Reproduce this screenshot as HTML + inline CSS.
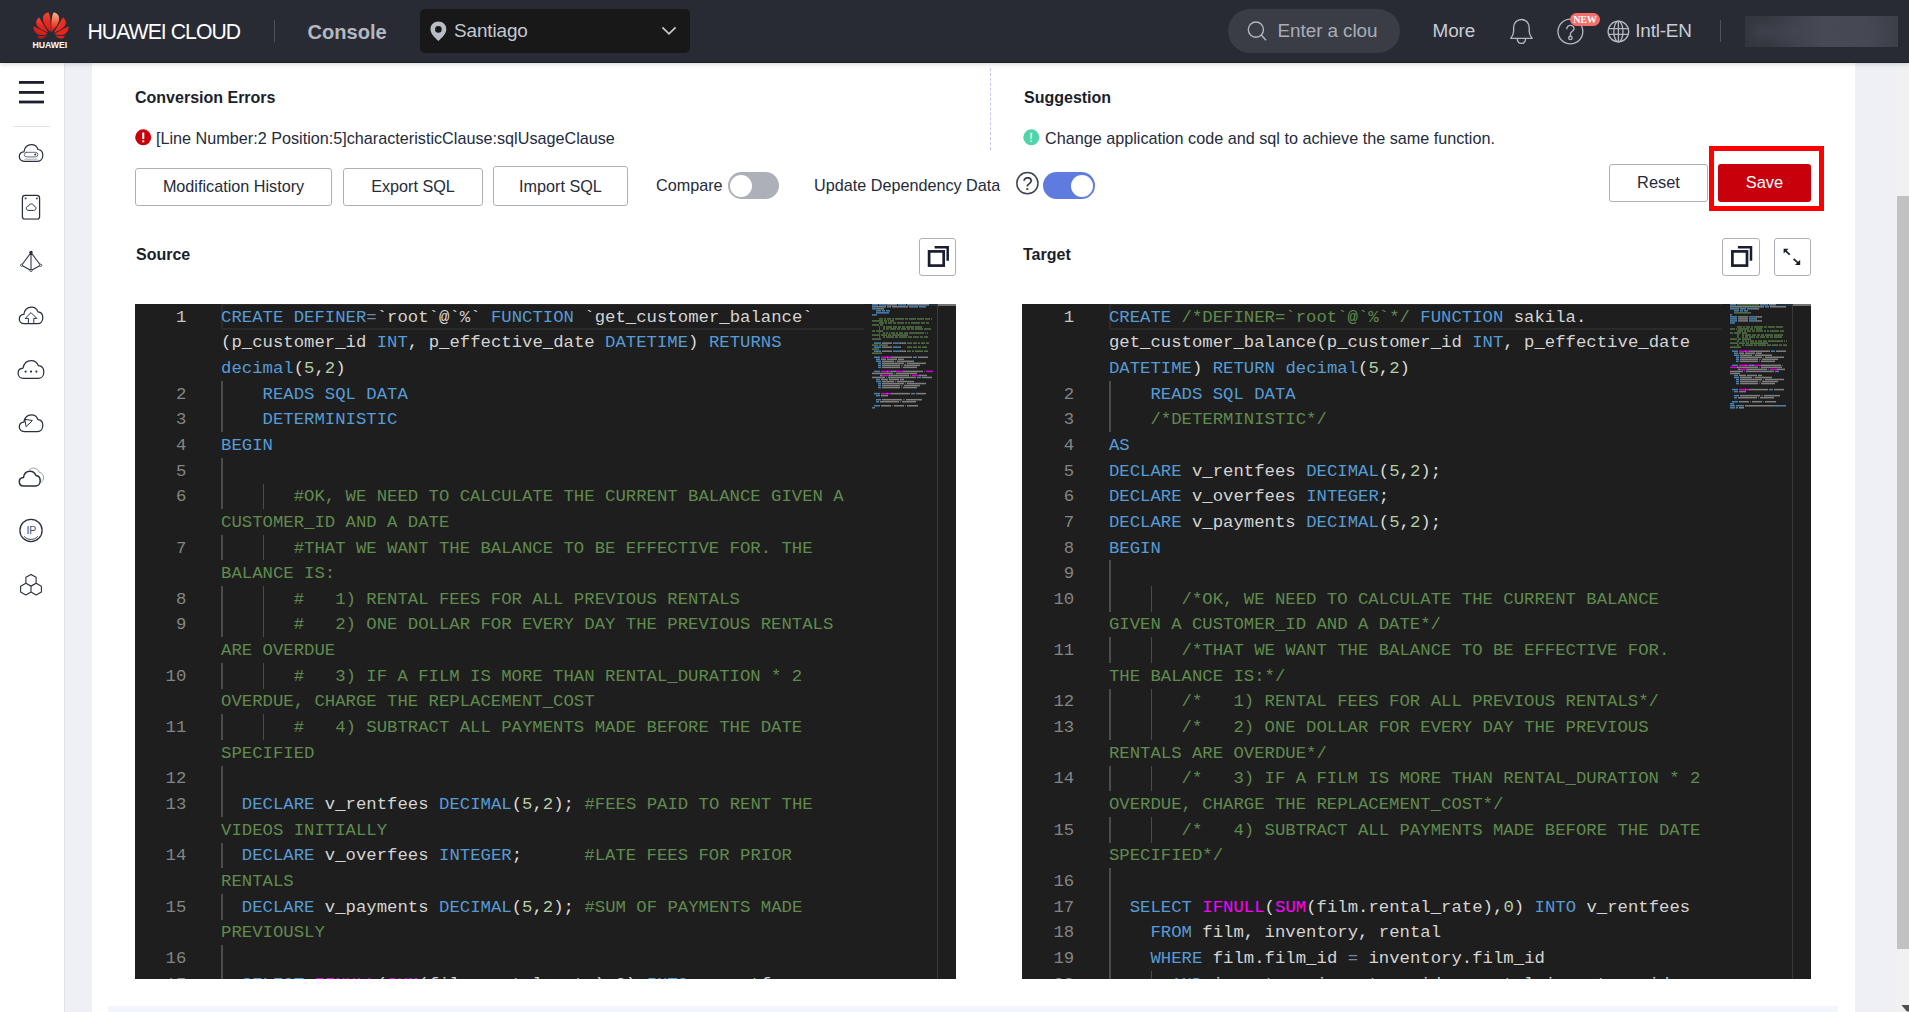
<!DOCTYPE html>
<html lang="en">
<head>
<meta charset="utf-8">
<title>Database and Application Migration UGO - HUAWEI CLOUD Console</title>
<style>
*{box-sizing:border-box}
html,body{margin:0;padding:0}
body{width:1909px;height:1012px;overflow:hidden;position:relative;background:#fff;font-family:"Liberation Sans",Arial,sans-serif;color:#252b3a;font-size:16.2px}
.abs,#hdr *,#side *,#main>*{position:absolute}
#hdr{position:absolute;left:0;top:0;width:1909px;height:63px;background:#282b33;border-bottom:1px solid #1e212a;box-shadow:0 1px 5px rgba(30,33,45,.2);z-index:5}
#hdr .t{white-space:nowrap;line-height:22px}
#side{position:absolute;left:0;top:63px;width:65px;height:949px;background:#fff;border-right:1px solid #dfe1e6}
#stripL{position:absolute;left:65px;top:63px;width:27px;height:949px;background:#eff0f6}
#stripR{position:absolute;left:1855px;top:63px;width:41px;height:949px;background:#eff0f6}
#sbar{position:absolute;left:1896px;top:63px;width:13px;height:949px;background:#f1f1f1}
#thumb{position:absolute;left:1897px;top:196px;width:12px;height:753px;background:#c1c1c1}
#main{position:absolute;left:0;top:0;width:1909px;height:1012px}
.b{font-weight:bold;white-space:nowrap;line-height:20px;color:#1a1e2b;font-size:16px;margin-top:1.2px}
.tx{white-space:nowrap;line-height:20px;color:#252b3a}
.btn{border:1px solid #adb0b8;border-radius:3px;background:#fff;text-align:center;white-space:nowrap;color:#252b3a}
.tg{border-radius:14px}
.tg i{position:absolute;top:2.5px;width:22px;height:22px;border-radius:50%;background:#fff}
/* editor */
.ed{position:absolute;background:#1e1e1e;overflow:hidden;font-family:"Liberation Mono","DejaVu Sans Mono",monospace;font-size:17.3px;color:#d4d4d4}
.ed>*{position:absolute}
.ed .r{left:86px;margin-top:.7px;height:25.65px;line-height:25.65px;white-space:pre;letter-spacing:0.008px}
.ed .ln{left:0;margin-top:.7px;width:50.5px;text-align:right;height:25.65px;line-height:25.65px;color:#858585;white-space:pre}
.ed .ln.a{color:#c6c6c6}
.ed .g{width:1.4px;background:#4b4b4b}
.ed .cl{height:26px;border:2px solid #2a2a2a;border-right:none;border-top-width:1.5px}
.ed .mm{top:0}
.ed .vr{top:0;width:1px;height:100%;background:#3a3a3a}
.ed .sl{top:0;height:2px;background:#727272}
.k{color:#569cd6}.i{color:#d4d4d4}.c{color:#608b4e}.n{color:#b5cea8}.o{color:#778899}.d{color:#dcdcdc}.f{color:#ff00ff}
</style>
</head>
<body>
<div id="main">
  <div id="side">
        <svg style="left:0;top:0" width="64" height="560" viewBox="0 63 64 560">
      <g fill="#1a1e2e"><rect x="19" y="81" width="25" height="2.8"/><rect x="19" y="91" width="25" height="2.8"/><rect x="19" y="100.6" width="25" height="2.8"/></g>
      <rect x="13" y="126" width="37" height="1" fill="#dfe1e6"/>
      <g fill="none" stroke="#2a2f3f" stroke-width="1.25" stroke-linejoin="round" stroke-linecap="round">
        <!-- 1 ecs cloud -->
        <path id="cl" d="M24.2 161.3C21.2 161.3 19.3 159.2 19.3 156.6C19.3 154 21.2 152.1 23.9 151.9C24.6 147.5 27.6 144.7 31.4 144.7C34.5 144.7 37 146.6 38 149.5C41.1 149.8 42.8 152.3 42.8 155.3C42.8 158.8 40.6 161.3 37.6 161.3z"/>
        <rect x="24.3" y="152.3" width="13.6" height="4.6" rx="2.3" stroke-width=".9" stroke="#555a69"/>
        <path d="M24.8 159.2H37.2" stroke="#a8abb5" stroke-width="1"/>
        <!-- 2 card -->
        <rect x="22.4" y="195.4" width="17.2" height="23.8" rx="2.8"/>
        <path d="M24.4 219H37.6" stroke="#8a8e99" stroke-width="1.6"/>
        <path d="M28.6 210.4C27.2 210.4 26.3 209.4 26.3 208.2C26.3 207 27.3 206.1 28.5 206.1C28.9 204.7 30 203.9 31.3 203.9C32.7 203.9 33.8 204.8 34.1 206.2C35.3 206.3 36 207.2 36 208.3C36 209.5 35.1 210.4 33.9 210.4z" stroke-width="1"/>
        <!-- 3 pyramid -->
        <path d="M31 252.5L21.6 265.3L31 270.5L40.6 265.3zM31 252.5V270.5" stroke-width="1.05"/>
        <!-- 4 cloud up -->
        <use href="#cl" y="162.4"/>
        <path d="M28.4 323.4V318.4H25.2L31 312.6L36.8 318.4H33.8V323.4" stroke-width="1"/>
        <!-- 5 cloud dots -->
        <path d="M23.4 378.4C20 378.4 18.1 376 18.1 373.2C18.1 370.4 20.1 368.4 23 368.2C23.8 363.5 27 360.5 31.2 360.5C34.6 360.5 37.3 362.6 38.4 365.7C41.8 366 43.8 368.7 43.8 371.9C43.8 375.7 41.4 378.4 38.1 378.4z"/>
        <!-- 6 cloud plane -->
        <use href="#cl" y="270.2"/>
        <path d="M25.2 419.4L32.4 420.5L26.4 426.4z" stroke-width="1"/>
        <!-- 7 double cloud -->
        <path d="M23.6 486C20.9 486 19.3 484.1 19.3 481.8C19.3 479.5 21 477.8 23.4 477.6C24 473.7 26.7 471.3 30 471.3C32.8 471.3 35 473 35.9 475.6C38.7 475.9 40.2 478.1 40.2 480.7C40.2 483.8 38.2 486 35.6 486z" stroke-width="1.5"/>
        <path d="M29.4 469.8C30.6 468.6 32 468.1 33.4 468.1C36.2 468.1 38.4 469.8 39.3 472.4C42.1 472.7 43.6 474.9 43.6 477.5C43.6 479.6 42.7 481.3 41.3 482.2" stroke="#8f939e" stroke-width=".9"/>
        <!-- 8 ip -->
        <circle cx="31" cy="530.4" r="11.1"/>
        <path d="M24.4 536.6C26 538.4 28.3 539.4 31 539.4C33.7 539.4 36 538.4 37.6 536.6" stroke-width=".9"/>
        <!-- 9 hexagons -->
        <path d="M31 574.4L36.1 577.3V583.2L31 586.1L25.9 583.2V577.3zM25.9 583.3L31 586.2V592.1L25.9 595L20.6 592.1V586.2zM36.2 583.3L41.4 586.2V592.1L36.2 595L31 592.1V586.2z" stroke-width="1.1"/>
      </g>
      <g fill="#2a2f3f">
        <circle cx="35.3" cy="154.6" r="1"/>
        <circle cx="25.6" cy="198.4" r=".9"/><circle cx="36.9" cy="198.4" r=".9"/>
        <circle cx="31" cy="252.3" r="1.6"/>
        <circle cx="25.6" cy="371.6" r="1.1"/><circle cx="31" cy="371.6" r="1.1"/><circle cx="36.4" cy="371.6" r="1.1"/>
      </g>
      <g fill="#fff" stroke="#2a2f3f" stroke-width=".8"><circle cx="21.6" cy="265.3" r="1.1"/><circle cx="40.6" cy="265.3" r="1.1"/><circle cx="31" cy="270.5" r="1.1"/></g>
      <text x="31.3" y="534.2" text-anchor="middle" font-family="Liberation Sans, Arial, sans-serif" font-size="10.6" fill="#4a4f5e" letter-spacing="-.2">IP</text>
    </svg>

  </div>
  <div id="stripL"></div>
  <div id="stripR"></div>
  <div id="sbar"></div>
  <div id="thumb"></div>
  <svg style="left:1901px;top:1005px" width="8" height="7" viewBox="0 0 8 7"><path d="M.4 0H8V6.4H5.9z" fill="#505050"/></svg>
  <div style="left:108px;top:1006px;width:1730px;height:6px;background:#f2f5fc"></div>

  <!-- top info -->
  <div class="b" style="left:135px;top:87px">Conversion Errors</div>
  <svg style="left:135px;top:129px" width="17" height="17" viewBox="0 0 17 17"><circle cx="8.2" cy="8.3" r="8" fill="#c7000b"/><rect x="7.2" y="3.6" width="2.1" height="6.4" rx=".6" fill="#fff"/><rect x="7.2" y="11.2" width="2.1" height="2.1" rx=".6" fill="#fff"/></svg>
  <div class="tx" style="left:156px;top:128px">[Line Number:2 Position:5]characteristicClause:sqlUsageClause</div>

  <div style="left:990px;top:68px;width:0;height:82px;border-left:1px dashed #c3c9f2"></div>

  <div class="b" style="left:1024px;top:87px">Suggestion</div>
  <svg style="left:1023px;top:129px" width="17" height="17" viewBox="0 0 17 17"><circle cx="8.3" cy="8.3" r="8" fill="#50d4ab"/><rect x="7.5" y="3.8" width="1.6" height="6.2" rx=".5" fill="#fff"/><rect x="7.5" y="11.3" width="1.6" height="1.8" rx=".5" fill="#fff"/></svg>
  <div class="tx" style="left:1045px;top:128px">Change application code and sql to achieve the same function.</div>

  <!-- toolbar -->
  <div class="btn" style="left:135px;top:168px;width:197px;height:38px;line-height:34px">Modification History</div>
  <div class="btn" style="left:343px;top:168px;width:140px;height:38px;line-height:34px">Export SQL</div>
  <div class="btn" style="left:493px;top:166px;width:135px;height:40px;line-height:38px">Import SQL</div>
  <div class="tx" style="left:656px;top:175px">Compare</div>
  <div class="tg" style="left:727.5px;top:172px;width:51.5px;height:27px;background:#adb0b8"><i style="left:2.5px"></i></div>
  <div class="tx" style="left:814px;top:175px">Update Dependency Data</div>
  <svg style="left:1015px;top:171px" width="25" height="25" viewBox="0 0 25 25"><circle cx="12.4" cy="12.2" r="10.6" fill="none" stroke="#3d4250" stroke-width="1.5"/><text x="12.4" y="18.6" text-anchor="middle" font-family="Liberation Sans, Arial, sans-serif" font-size="18" fill="#252b3a">?</text></svg>
  <div class="tg" style="left:1043px;top:172px;width:52px;height:27px;background:#5e7ce0"><i style="left:27.5px"></i></div>

  <div class="btn" style="left:1609px;top:164px;width:99px;height:38px;line-height:35px;font-size:16.4px">Reset</div>
  <div style="left:1709px;top:146px;width:115px;height:65px;border:5px solid #fe0000"></div>
  <div style="left:1718px;top:164px;width:93px;height:38px;line-height:36px;background:#c7000b;border-radius:3px;color:#fff;text-align:center;font-size:16.4px">Save</div>

  <!-- editor headers -->
  <div class="b" style="left:136px;top:244px">Source</div>
  <div class="btn" style="left:919px;top:238px;width:37px;height:38px"></div>
  <svg style="left:919px;top:238px" width="38" height="38" viewBox="0 0 38 38"><rect x="10.1" y="13.4" width="14.6" height="14.2" fill="none" stroke="#191e2e" stroke-width="2.7"/><path d="M15.6 9.3H28.7V22.8" fill="none" stroke="#191e2e" stroke-width="2.5"/></svg>

  <div class="b" style="left:1023px;top:244px">Target</div>
  <div class="btn" style="left:1722px;top:238px;width:38px;height:38px"></div>
  <svg style="left:1722px;top:238px" width="38" height="38" viewBox="0 0 38 38"><rect x="10.4" y="13.4" width="14.6" height="14.2" fill="none" stroke="#191e2e" stroke-width="2.7"/><path d="M15.9 9.3H29V22.8" fill="none" stroke="#191e2e" stroke-width="2.5"/></svg>
  <div class="btn" style="left:1774px;top:238px;width:37px;height:38px"></div>
  <svg style="left:1774px;top:238px" width="38" height="38" viewBox="0 0 38 38"><g fill="#191e2e" stroke="#191e2e"><path d="M11.6 12.8L15.7 16.6" stroke-width="1.7" fill="none"/><path d="M9.6 10.7H14.6L9.6 15.5z" stroke="none"/><path d="M19.6 20.8L24 24.8" stroke-width="1.7" fill="none"/><path d="M26.2 26.9H21L26.2 21.8z" stroke="none"/></g></svg>

<div class="ed" id="edL" style="left:135px;top:304px;width:821px;height:675px">
<div class="cl" style="left:86.0px;top:0;width:643.0px"></div>
<div class="ln a" style="top:0.00px;width:51.3px">1</div>
<div class="r" style="top:0.00px;left:86.0px"><span class="k">CREATE</span> <span class="k">DEFINER</span><span class="o">=</span><span class="i">`root`</span><span class="d">@</span><span class="i">`%`</span> <span class="k">FUNCTION</span> <span class="i">`get_customer_balance`</span></div>
<div class="r" style="top:25.65px;left:86.0px"><span class="d">(</span><span class="i">p_customer_id</span> <span class="k">INT</span><span class="d">,</span> <span class="i">p_effective_date</span> <span class="k">DATETIME</span><span class="d">)</span> <span class="k">RETURNS</span> </div>
<div class="r" style="top:51.30px;left:86.0px"><span class="k">decimal</span><span class="d">(</span><span class="n">5</span><span class="d">,</span><span class="n">2</span><span class="d">)</span></div>
<div class="ln" style="top:76.95px;width:51.3px">2</div>
<i class="g" style="left:86.3px;top:77px;height:26px"></i>
<div class="r" style="top:76.95px;left:86.0px">    <span class="k">READS</span> <span class="k">SQL</span> <span class="k">DATA</span></div>
<div class="ln" style="top:102.60px;width:51.3px">3</div>
<i class="g" style="left:86.3px;top:103px;height:25px"></i>
<div class="r" style="top:102.60px;left:86.0px">    <span class="k">DETERMINISTIC</span></div>
<div class="ln" style="top:128.25px;width:51.3px">4</div>
<div class="r" style="top:128.25px;left:86.0px"><span class="k">BEGIN</span></div>
<div class="ln" style="top:153.90px;width:51.3px">5</div>
<i class="g" style="left:86.3px;top:154px;height:26px"></i>
<div class="ln" style="top:179.55px;width:51.3px">6</div>
<i class="g" style="left:86.3px;top:180px;height:25px"></i>
<i class="g" style="left:127.9px;top:180px;height:25px"></i>
<div class="r" style="top:179.55px;left:86.0px">       <span class="c">#OK, WE NEED TO CALCULATE THE CURRENT BALANCE GIVEN A </span></div>
<div class="r" style="top:205.20px;left:86.0px"><span class="c">CUSTOMER_ID AND A DATE</span></div>
<div class="ln" style="top:230.85px;width:51.3px">7</div>
<i class="g" style="left:86.3px;top:231px;height:25px"></i>
<i class="g" style="left:127.9px;top:231px;height:25px"></i>
<div class="r" style="top:230.85px;left:86.0px">       <span class="c">#THAT WE WANT THE BALANCE TO BE EFFECTIVE FOR. THE </span></div>
<div class="r" style="top:256.50px;left:86.0px"><span class="c">BALANCE IS:</span></div>
<div class="ln" style="top:282.15px;width:51.3px">8</div>
<i class="g" style="left:86.3px;top:282px;height:26px"></i>
<i class="g" style="left:127.9px;top:282px;height:26px"></i>
<div class="r" style="top:282.15px;left:86.0px">       <span class="c">#   1) RENTAL FEES FOR ALL PREVIOUS RENTALS</span></div>
<div class="ln" style="top:307.80px;width:51.3px">9</div>
<i class="g" style="left:86.3px;top:308px;height:25px"></i>
<i class="g" style="left:127.9px;top:308px;height:25px"></i>
<div class="r" style="top:307.80px;left:86.0px">       <span class="c">#   2) ONE DOLLAR FOR EVERY DAY THE PREVIOUS RENTALS </span></div>
<div class="r" style="top:333.45px;left:86.0px"><span class="c">ARE OVERDUE</span></div>
<div class="ln" style="top:359.10px;width:51.3px">10</div>
<i class="g" style="left:86.3px;top:359px;height:26px"></i>
<i class="g" style="left:127.9px;top:359px;height:26px"></i>
<div class="r" style="top:359.10px;left:86.0px">       <span class="c">#   3) IF A FILM IS MORE THAN RENTAL_DURATION * 2 </span></div>
<div class="r" style="top:384.75px;left:86.0px"><span class="c">OVERDUE, CHARGE THE REPLACEMENT_COST</span></div>
<div class="ln" style="top:410.40px;width:51.3px">11</div>
<i class="g" style="left:86.3px;top:410px;height:26px"></i>
<i class="g" style="left:127.9px;top:410px;height:26px"></i>
<div class="r" style="top:410.40px;left:86.0px">       <span class="c">#   4) SUBTRACT ALL PAYMENTS MADE BEFORE THE DATE </span></div>
<div class="r" style="top:436.05px;left:86.0px"><span class="c">SPECIFIED</span></div>
<div class="ln" style="top:461.70px;width:51.3px">12</div>
<i class="g" style="left:86.3px;top:462px;height:25px"></i>
<div class="ln" style="top:487.35px;width:51.3px">13</div>
<i class="g" style="left:86.3px;top:487px;height:26px"></i>
<div class="r" style="top:487.35px;left:86.0px">  <span class="k">DECLARE</span> <span class="i">v_rentfees</span> <span class="k">DECIMAL</span><span class="d">(</span><span class="n">5</span><span class="d">,</span><span class="n">2</span><span class="d">);</span> <span class="c">#FEES PAID TO RENT THE </span></div>
<div class="r" style="top:513.00px;left:86.0px"><span class="c">VIDEOS INITIALLY</span></div>
<div class="ln" style="top:538.65px;width:51.3px">14</div>
<i class="g" style="left:86.3px;top:539px;height:25px"></i>
<div class="r" style="top:538.65px;left:86.0px">  <span class="k">DECLARE</span> <span class="i">v_overfees</span> <span class="k">INTEGER</span><span class="d">;</span>      <span class="c">#LATE FEES FOR PRIOR </span></div>
<div class="r" style="top:564.30px;left:86.0px"><span class="c">RENTALS</span></div>
<div class="ln" style="top:589.95px;width:51.3px">15</div>
<i class="g" style="left:86.3px;top:590px;height:26px"></i>
<div class="r" style="top:589.95px;left:86.0px">  <span class="k">DECLARE</span> <span class="i">v_payments</span> <span class="k">DECIMAL</span><span class="d">(</span><span class="n">5</span><span class="d">,</span><span class="n">2</span><span class="d">);</span> <span class="c">#SUM OF PAYMENTS MADE </span></div>
<div class="r" style="top:615.60px;left:86.0px"><span class="c">PREVIOUSLY</span></div>
<div class="ln" style="top:641.25px;width:51.3px">16</div>
<i class="g" style="left:86.3px;top:641px;height:26px"></i>
<div class="ln" style="top:666.90px;width:51.3px">17</div>
<i class="g" style="left:86.3px;top:667px;height:26px"></i>
<div class="r" style="top:666.90px;left:86.0px">  <span class="k">SELECT</span> <span class="f">IFNULL</span><span class="d">(</span><span class="f">SUM</span><span class="d">(</span><span class="i">film</span><span class="d">.</span><span class="i">rental_rate</span><span class="d">),</span><span class="n">0</span><span class="d">)</span> <span class="k">INTO</span> <span class="i">v_rentfees</span></div>
<div class="ln" style="top:692.55px;width:51.3px">18</div>
<i class="g" style="left:86.3px;top:693px;height:25px"></i>
<div class="r" style="top:692.55px;left:86.0px">    <span class="k">FROM</span> <span class="i">film</span><span class="d">,</span> <span class="i">inventory</span><span class="d">,</span> <span class="i">rental</span></div>
<svg class="mm" style="left:737px" width="70" height="107" viewBox="0 0 70 107"><rect x="0" y="0" width="66" height="2" fill="#264f78" opacity=".4"/><g opacity=".78"><rect x="0.0" y="0.00" width="6.0" height="1.5" fill="#569cd6"/><rect x="7.0" y="0.00" width="7.0" height="1.5" fill="#569cd6"/><rect x="14.0" y="0.00" width="1.0" height="1.5" fill="#778899" opacity=".68"/><rect x="15.0" y="0.00" width="6.0" height="1.5" fill="#d4d4d4" opacity=".68"/><rect x="21.0" y="0.00" width="1.0" height="1.5" fill="#dcdcdc" opacity=".68"/><rect x="22.0" y="0.00" width="3.0" height="1.5" fill="#d4d4d4" opacity=".68"/><rect x="26.0" y="0.00" width="8.0" height="1.5" fill="#569cd6"/><rect x="35.0" y="0.00" width="22.0" height="1.5" fill="#d4d4d4" opacity=".68"/><rect x="0.0" y="2.02" width="1.0" height="1.5" fill="#dcdcdc" opacity=".68"/><rect x="1.0" y="2.02" width="13.0" height="1.5" fill="#d4d4d4" opacity=".68"/><rect x="15.0" y="2.02" width="3.0" height="1.5" fill="#569cd6"/><rect x="18.0" y="2.02" width="1.0" height="1.5" fill="#dcdcdc" opacity=".68"/><rect x="20.0" y="2.02" width="16.0" height="1.5" fill="#d4d4d4" opacity=".68"/><rect x="37.0" y="2.02" width="8.0" height="1.5" fill="#569cd6"/><rect x="45.0" y="2.02" width="1.0" height="1.5" fill="#dcdcdc" opacity=".68"/><rect x="47.0" y="2.02" width="7.0" height="1.5" fill="#569cd6"/><rect x="0.0" y="4.04" width="7.0" height="1.5" fill="#569cd6"/><rect x="7.0" y="4.04" width="1.0" height="1.5" fill="#dcdcdc" opacity=".68"/><rect x="8.0" y="4.04" width="1.0" height="1.5" fill="#b5cea8" opacity=".68"/><rect x="9.0" y="4.04" width="1.0" height="1.5" fill="#dcdcdc" opacity=".68"/><rect x="10.0" y="4.04" width="1.0" height="1.5" fill="#b5cea8" opacity=".68"/><rect x="11.0" y="4.04" width="1.0" height="1.5" fill="#dcdcdc" opacity=".68"/><rect x="4.0" y="6.06" width="5.0" height="1.5" fill="#569cd6"/><rect x="10.0" y="6.06" width="3.0" height="1.5" fill="#569cd6"/><rect x="14.0" y="6.06" width="4.0" height="1.5" fill="#569cd6"/><rect x="4.0" y="8.08" width="13.0" height="1.5" fill="#569cd6"/><rect x="0.0" y="10.10" width="5.0" height="1.5" fill="#569cd6"/><rect x="7.0" y="14.14" width="4.0" height="1.5" fill="#608b4e"/><rect x="12.0" y="14.14" width="2.0" height="1.5" fill="#608b4e"/><rect x="15.0" y="14.14" width="4.0" height="1.5" fill="#608b4e"/><rect x="20.0" y="14.14" width="2.0" height="1.5" fill="#608b4e"/><rect x="23.0" y="14.14" width="9.0" height="1.5" fill="#608b4e"/><rect x="33.0" y="14.14" width="3.0" height="1.5" fill="#608b4e"/><rect x="37.0" y="14.14" width="7.0" height="1.5" fill="#608b4e"/><rect x="45.0" y="14.14" width="7.0" height="1.5" fill="#608b4e"/><rect x="53.0" y="14.14" width="5.0" height="1.5" fill="#608b4e"/><rect x="59.0" y="14.14" width="1.0" height="1.5" fill="#608b4e"/><rect x="0.0" y="16.16" width="11.0" height="1.5" fill="#608b4e"/><rect x="12.0" y="16.16" width="3.0" height="1.5" fill="#608b4e"/><rect x="16.0" y="16.16" width="1.0" height="1.5" fill="#608b4e"/><rect x="18.0" y="16.16" width="4.0" height="1.5" fill="#608b4e"/><rect x="7.0" y="18.18" width="5.0" height="1.5" fill="#608b4e"/><rect x="13.0" y="18.18" width="2.0" height="1.5" fill="#608b4e"/><rect x="16.0" y="18.18" width="4.0" height="1.5" fill="#608b4e"/><rect x="21.0" y="18.18" width="3.0" height="1.5" fill="#608b4e"/><rect x="25.0" y="18.18" width="7.0" height="1.5" fill="#608b4e"/><rect x="33.0" y="18.18" width="2.0" height="1.5" fill="#608b4e"/><rect x="36.0" y="18.18" width="2.0" height="1.5" fill="#608b4e"/><rect x="39.0" y="18.18" width="9.0" height="1.5" fill="#608b4e"/><rect x="49.0" y="18.18" width="4.0" height="1.5" fill="#608b4e"/><rect x="54.0" y="18.18" width="3.0" height="1.5" fill="#608b4e"/><rect x="0.0" y="20.20" width="7.0" height="1.5" fill="#608b4e"/><rect x="8.0" y="20.20" width="3.0" height="1.5" fill="#608b4e"/><rect x="7.0" y="22.22" width="1.0" height="1.5" fill="#608b4e"/><rect x="11.0" y="22.22" width="2.0" height="1.5" fill="#608b4e"/><rect x="14.0" y="22.22" width="6.0" height="1.5" fill="#608b4e"/><rect x="21.0" y="22.22" width="4.0" height="1.5" fill="#608b4e"/><rect x="26.0" y="22.22" width="3.0" height="1.5" fill="#608b4e"/><rect x="30.0" y="22.22" width="3.0" height="1.5" fill="#608b4e"/><rect x="34.0" y="22.22" width="8.0" height="1.5" fill="#608b4e"/><rect x="43.0" y="22.22" width="7.0" height="1.5" fill="#608b4e"/><rect x="7.0" y="24.24" width="1.0" height="1.5" fill="#608b4e"/><rect x="11.0" y="24.24" width="2.0" height="1.5" fill="#608b4e"/><rect x="14.0" y="24.24" width="3.0" height="1.5" fill="#608b4e"/><rect x="18.0" y="24.24" width="6.0" height="1.5" fill="#608b4e"/><rect x="25.0" y="24.24" width="3.0" height="1.5" fill="#608b4e"/><rect x="29.0" y="24.24" width="5.0" height="1.5" fill="#608b4e"/><rect x="35.0" y="24.24" width="3.0" height="1.5" fill="#608b4e"/><rect x="39.0" y="24.24" width="3.0" height="1.5" fill="#608b4e"/><rect x="43.0" y="24.24" width="8.0" height="1.5" fill="#608b4e"/><rect x="52.0" y="24.24" width="7.0" height="1.5" fill="#608b4e"/><rect x="0.0" y="26.26" width="3.0" height="1.5" fill="#608b4e"/><rect x="4.0" y="26.26" width="7.0" height="1.5" fill="#608b4e"/><rect x="7.0" y="28.28" width="1.0" height="1.5" fill="#608b4e"/><rect x="11.0" y="28.28" width="2.0" height="1.5" fill="#608b4e"/><rect x="14.0" y="28.28" width="2.0" height="1.5" fill="#608b4e"/><rect x="17.0" y="28.28" width="1.0" height="1.5" fill="#608b4e"/><rect x="19.0" y="28.28" width="4.0" height="1.5" fill="#608b4e"/><rect x="24.0" y="28.28" width="2.0" height="1.5" fill="#608b4e"/><rect x="27.0" y="28.28" width="4.0" height="1.5" fill="#608b4e"/><rect x="32.0" y="28.28" width="4.0" height="1.5" fill="#608b4e"/><rect x="37.0" y="28.28" width="15.0" height="1.5" fill="#608b4e"/><rect x="53.0" y="28.28" width="1.0" height="1.5" fill="#608b4e"/><rect x="55.0" y="28.28" width="1.0" height="1.5" fill="#608b4e"/><rect x="0.0" y="30.30" width="8.0" height="1.5" fill="#608b4e"/><rect x="9.0" y="30.30" width="6.0" height="1.5" fill="#608b4e"/><rect x="16.0" y="30.30" width="3.0" height="1.5" fill="#608b4e"/><rect x="20.0" y="30.30" width="16.0" height="1.5" fill="#608b4e"/><rect x="7.0" y="32.32" width="1.0" height="1.5" fill="#608b4e"/><rect x="11.0" y="32.32" width="2.0" height="1.5" fill="#608b4e"/><rect x="14.0" y="32.32" width="8.0" height="1.5" fill="#608b4e"/><rect x="23.0" y="32.32" width="3.0" height="1.5" fill="#608b4e"/><rect x="27.0" y="32.32" width="8.0" height="1.5" fill="#608b4e"/><rect x="36.0" y="32.32" width="4.0" height="1.5" fill="#608b4e"/><rect x="41.0" y="32.32" width="6.0" height="1.5" fill="#608b4e"/><rect x="48.0" y="32.32" width="3.0" height="1.5" fill="#608b4e"/><rect x="52.0" y="32.32" width="4.0" height="1.5" fill="#608b4e"/><rect x="0.0" y="34.34" width="9.0" height="1.5" fill="#608b4e"/><rect x="2.0" y="38.38" width="7.0" height="1.5" fill="#569cd6"/><rect x="10.0" y="38.38" width="10.0" height="1.5" fill="#d4d4d4" opacity=".68"/><rect x="21.0" y="38.38" width="7.0" height="1.5" fill="#569cd6"/><rect x="28.0" y="38.38" width="1.0" height="1.5" fill="#dcdcdc" opacity=".68"/><rect x="29.0" y="38.38" width="1.0" height="1.5" fill="#b5cea8" opacity=".68"/><rect x="30.0" y="38.38" width="1.0" height="1.5" fill="#dcdcdc" opacity=".68"/><rect x="31.0" y="38.38" width="1.0" height="1.5" fill="#b5cea8" opacity=".68"/><rect x="32.0" y="38.38" width="2.0" height="1.5" fill="#dcdcdc" opacity=".68"/><rect x="35.0" y="38.38" width="5.0" height="1.5" fill="#608b4e"/><rect x="41.0" y="38.38" width="4.0" height="1.5" fill="#608b4e"/><rect x="46.0" y="38.38" width="2.0" height="1.5" fill="#608b4e"/><rect x="49.0" y="38.38" width="4.0" height="1.5" fill="#608b4e"/><rect x="54.0" y="38.38" width="3.0" height="1.5" fill="#608b4e"/><rect x="0.0" y="40.40" width="6.0" height="1.5" fill="#608b4e"/><rect x="7.0" y="40.40" width="9.0" height="1.5" fill="#608b4e"/><rect x="2.0" y="42.42" width="7.0" height="1.5" fill="#569cd6"/><rect x="10.0" y="42.42" width="10.0" height="1.5" fill="#d4d4d4" opacity=".68"/><rect x="21.0" y="42.42" width="7.0" height="1.5" fill="#569cd6"/><rect x="28.0" y="42.42" width="1.0" height="1.5" fill="#dcdcdc" opacity=".68"/><rect x="35.0" y="42.42" width="5.0" height="1.5" fill="#608b4e"/><rect x="41.0" y="42.42" width="4.0" height="1.5" fill="#608b4e"/><rect x="46.0" y="42.42" width="3.0" height="1.5" fill="#608b4e"/><rect x="50.0" y="42.42" width="5.0" height="1.5" fill="#608b4e"/><rect x="0.0" y="44.44" width="7.0" height="1.5" fill="#608b4e"/><rect x="2.0" y="46.46" width="7.0" height="1.5" fill="#569cd6"/><rect x="10.0" y="46.46" width="10.0" height="1.5" fill="#d4d4d4" opacity=".68"/><rect x="21.0" y="46.46" width="7.0" height="1.5" fill="#569cd6"/><rect x="28.0" y="46.46" width="1.0" height="1.5" fill="#dcdcdc" opacity=".68"/><rect x="29.0" y="46.46" width="1.0" height="1.5" fill="#b5cea8" opacity=".68"/><rect x="30.0" y="46.46" width="1.0" height="1.5" fill="#dcdcdc" opacity=".68"/><rect x="31.0" y="46.46" width="1.0" height="1.5" fill="#b5cea8" opacity=".68"/><rect x="32.0" y="46.46" width="2.0" height="1.5" fill="#dcdcdc" opacity=".68"/><rect x="35.0" y="46.46" width="4.0" height="1.5" fill="#608b4e"/><rect x="40.0" y="46.46" width="2.0" height="1.5" fill="#608b4e"/><rect x="43.0" y="46.46" width="8.0" height="1.5" fill="#608b4e"/><rect x="52.0" y="46.46" width="4.0" height="1.5" fill="#608b4e"/><rect x="0.0" y="48.48" width="10.0" height="1.5" fill="#608b4e"/><rect x="2.0" y="52.52" width="6.0" height="1.5" fill="#569cd6"/><rect x="9.0" y="52.52" width="6.0" height="1.5" fill="#ff00ff"/><rect x="15.0" y="52.52" width="1.0" height="1.5" fill="#dcdcdc" opacity=".68"/><rect x="16.0" y="52.52" width="3.0" height="1.5" fill="#ff00ff"/><rect x="19.0" y="52.52" width="1.0" height="1.5" fill="#dcdcdc" opacity=".68"/><rect x="20.0" y="52.52" width="4.0" height="1.5" fill="#d4d4d4" opacity=".68"/><rect x="24.0" y="52.52" width="1.0" height="1.5" fill="#dcdcdc" opacity=".68"/><rect x="25.0" y="52.52" width="11.0" height="1.5" fill="#d4d4d4" opacity=".68"/><rect x="36.0" y="52.52" width="2.0" height="1.5" fill="#dcdcdc" opacity=".68"/><rect x="38.0" y="52.52" width="1.0" height="1.5" fill="#b5cea8" opacity=".68"/><rect x="39.0" y="52.52" width="1.0" height="1.5" fill="#dcdcdc" opacity=".68"/><rect x="41.0" y="52.52" width="4.0" height="1.5" fill="#569cd6"/><rect x="46.0" y="52.52" width="10.0" height="1.5" fill="#d4d4d4" opacity=".68"/><rect x="4.0" y="54.54" width="4.0" height="1.5" fill="#569cd6"/><rect x="9.0" y="54.54" width="4.0" height="1.5" fill="#d4d4d4" opacity=".68"/><rect x="13.0" y="54.54" width="1.0" height="1.5" fill="#dcdcdc" opacity=".68"/><rect x="15.0" y="54.54" width="9.0" height="1.5" fill="#d4d4d4" opacity=".68"/><rect x="24.0" y="54.54" width="1.0" height="1.5" fill="#dcdcdc" opacity=".68"/><rect x="26.0" y="54.54" width="6.0" height="1.5" fill="#d4d4d4" opacity=".68"/><rect x="4.0" y="56.56" width="5.0" height="1.5" fill="#569cd6"/><rect x="10.0" y="56.56" width="4.0" height="1.5" fill="#d4d4d4" opacity=".68"/><rect x="14.0" y="56.56" width="1.0" height="1.5" fill="#dcdcdc" opacity=".68"/><rect x="15.0" y="56.56" width="7.0" height="1.5" fill="#d4d4d4" opacity=".68"/><rect x="23.0" y="56.56" width="1.0" height="1.5" fill="#778899" opacity=".68"/><rect x="25.0" y="56.56" width="9.0" height="1.5" fill="#d4d4d4" opacity=".68"/><rect x="34.0" y="56.56" width="1.0" height="1.5" fill="#dcdcdc" opacity=".68"/><rect x="35.0" y="56.56" width="7.0" height="1.5" fill="#d4d4d4" opacity=".68"/><rect x="6.0" y="58.58" width="3.0" height="1.5" fill="#569cd6"/><rect x="10.0" y="58.58" width="9.0" height="1.5" fill="#d4d4d4" opacity=".68"/><rect x="19.0" y="58.58" width="1.0" height="1.5" fill="#dcdcdc" opacity=".68"/><rect x="20.0" y="58.58" width="12.0" height="1.5" fill="#d4d4d4" opacity=".68"/><rect x="33.0" y="58.58" width="1.0" height="1.5" fill="#778899" opacity=".68"/><rect x="35.0" y="58.58" width="6.0" height="1.5" fill="#d4d4d4" opacity=".68"/><rect x="41.0" y="58.58" width="1.0" height="1.5" fill="#dcdcdc" opacity=".68"/><rect x="42.0" y="58.58" width="12.0" height="1.5" fill="#d4d4d4" opacity=".68"/><rect x="6.0" y="60.60" width="3.0" height="1.5" fill="#569cd6"/><rect x="10.0" y="60.60" width="6.0" height="1.5" fill="#d4d4d4" opacity=".68"/><rect x="16.0" y="60.60" width="1.0" height="1.5" fill="#dcdcdc" opacity=".68"/><rect x="17.0" y="60.60" width="11.0" height="1.5" fill="#d4d4d4" opacity=".68"/><rect x="29.0" y="60.60" width="2.0" height="1.5" fill="#778899" opacity=".68"/><rect x="32.0" y="60.60" width="16.0" height="1.5" fill="#d4d4d4" opacity=".68"/><rect x="6.0" y="62.62" width="3.0" height="1.5" fill="#569cd6"/><rect x="10.0" y="62.62" width="6.0" height="1.5" fill="#d4d4d4" opacity=".68"/><rect x="16.0" y="62.62" width="1.0" height="1.5" fill="#dcdcdc" opacity=".68"/><rect x="17.0" y="62.62" width="11.0" height="1.5" fill="#d4d4d4" opacity=".68"/><rect x="29.0" y="62.62" width="1.0" height="1.5" fill="#778899" opacity=".68"/><rect x="31.0" y="62.62" width="13.0" height="1.5" fill="#d4d4d4" opacity=".68"/><rect x="44.0" y="62.62" width="1.0" height="1.5" fill="#dcdcdc" opacity=".68"/><rect x="2.0" y="66.66" width="6.0" height="1.5" fill="#569cd6"/><rect x="9.0" y="66.66" width="6.0" height="1.5" fill="#ff00ff"/><rect x="15.0" y="66.66" width="1.0" height="1.5" fill="#dcdcdc" opacity=".68"/><rect x="16.0" y="66.66" width="3.0" height="1.5" fill="#ff00ff"/><rect x="19.0" y="66.66" width="1.0" height="1.5" fill="#dcdcdc" opacity=".68"/><rect x="20.0" y="66.66" width="2.0" height="1.5" fill="#569cd6"/><rect x="22.0" y="66.66" width="2.0" height="1.5" fill="#dcdcdc" opacity=".68"/><rect x="24.0" y="66.66" width="7.0" height="1.5" fill="#ff00ff"/><rect x="31.0" y="66.66" width="1.0" height="1.5" fill="#dcdcdc" opacity=".68"/><rect x="32.0" y="66.66" width="6.0" height="1.5" fill="#d4d4d4" opacity=".68"/><rect x="38.0" y="66.66" width="1.0" height="1.5" fill="#dcdcdc" opacity=".68"/><rect x="39.0" y="66.66" width="11.0" height="1.5" fill="#d4d4d4" opacity=".68"/><rect x="50.0" y="66.66" width="1.0" height="1.5" fill="#dcdcdc" opacity=".68"/><rect x="52.0" y="66.66" width="1.0" height="1.5" fill="#778899" opacity=".68"/><rect x="54.0" y="66.66" width="7.0" height="1.5" fill="#ff00ff"/><rect x="0.0" y="68.68" width="1.0" height="1.5" fill="#dcdcdc" opacity=".68"/><rect x="1.0" y="68.68" width="6.0" height="1.5" fill="#d4d4d4" opacity=".68"/><rect x="7.0" y="68.68" width="1.0" height="1.5" fill="#dcdcdc" opacity=".68"/><rect x="8.0" y="68.68" width="11.0" height="1.5" fill="#d4d4d4" opacity=".68"/><rect x="19.0" y="68.68" width="2.0" height="1.5" fill="#dcdcdc" opacity=".68"/><rect x="22.0" y="68.68" width="1.0" height="1.5" fill="#778899" opacity=".68"/><rect x="24.0" y="68.68" width="4.0" height="1.5" fill="#d4d4d4" opacity=".68"/><rect x="28.0" y="68.68" width="1.0" height="1.5" fill="#dcdcdc" opacity=".68"/><rect x="29.0" y="68.68" width="15.0" height="1.5" fill="#d4d4d4" opacity=".68"/><rect x="44.0" y="68.68" width="1.0" height="1.5" fill="#dcdcdc" opacity=".68"/><rect x="8.0" y="70.70" width="2.0" height="1.5" fill="#dcdcdc" opacity=".68"/><rect x="10.0" y="70.70" width="7.0" height="1.5" fill="#ff00ff"/><rect x="17.0" y="70.70" width="1.0" height="1.5" fill="#dcdcdc" opacity=".68"/><rect x="18.0" y="70.70" width="6.0" height="1.5" fill="#d4d4d4" opacity=".68"/><rect x="24.0" y="70.70" width="1.0" height="1.5" fill="#dcdcdc" opacity=".68"/><rect x="25.0" y="70.70" width="11.0" height="1.5" fill="#d4d4d4" opacity=".68"/><rect x="36.0" y="70.70" width="1.0" height="1.5" fill="#dcdcdc" opacity=".68"/><rect x="38.0" y="70.70" width="1.0" height="1.5" fill="#778899" opacity=".68"/><rect x="40.0" y="70.70" width="7.0" height="1.5" fill="#ff00ff"/><rect x="47.0" y="70.70" width="1.0" height="1.5" fill="#dcdcdc" opacity=".68"/><rect x="48.0" y="70.70" width="6.0" height="1.5" fill="#d4d4d4" opacity=".68"/><rect x="54.0" y="70.70" width="1.0" height="1.5" fill="#dcdcdc" opacity=".68"/><rect x="0.0" y="72.72" width="11.0" height="1.5" fill="#d4d4d4" opacity=".68"/><rect x="11.0" y="72.72" width="2.0" height="1.5" fill="#dcdcdc" opacity=".68"/><rect x="14.0" y="72.72" width="1.0" height="1.5" fill="#778899" opacity=".68"/><rect x="16.0" y="72.72" width="4.0" height="1.5" fill="#d4d4d4" opacity=".68"/><rect x="20.0" y="72.72" width="1.0" height="1.5" fill="#dcdcdc" opacity=".68"/><rect x="21.0" y="72.72" width="15.0" height="1.5" fill="#d4d4d4" opacity=".68"/><rect x="36.0" y="72.72" width="2.0" height="1.5" fill="#dcdcdc" opacity=".68"/><rect x="38.0" y="72.72" width="1.0" height="1.5" fill="#b5cea8" opacity=".68"/><rect x="39.0" y="72.72" width="3.0" height="1.5" fill="#dcdcdc" opacity=".68"/><rect x="42.0" y="72.72" width="1.0" height="1.5" fill="#b5cea8" opacity=".68"/><rect x="43.0" y="72.72" width="1.0" height="1.5" fill="#dcdcdc" opacity=".68"/><rect x="45.0" y="72.72" width="4.0" height="1.5" fill="#569cd6"/><rect x="50.0" y="72.72" width="10.0" height="1.5" fill="#d4d4d4" opacity=".68"/><rect x="4.0" y="74.74" width="4.0" height="1.5" fill="#569cd6"/><rect x="9.0" y="74.74" width="6.0" height="1.5" fill="#d4d4d4" opacity=".68"/><rect x="15.0" y="74.74" width="1.0" height="1.5" fill="#dcdcdc" opacity=".68"/><rect x="17.0" y="74.74" width="9.0" height="1.5" fill="#d4d4d4" opacity=".68"/><rect x="26.0" y="74.74" width="1.0" height="1.5" fill="#dcdcdc" opacity=".68"/><rect x="28.0" y="74.74" width="4.0" height="1.5" fill="#d4d4d4" opacity=".68"/><rect x="4.0" y="76.76" width="5.0" height="1.5" fill="#569cd6"/><rect x="10.0" y="76.76" width="4.0" height="1.5" fill="#d4d4d4" opacity=".68"/><rect x="14.0" y="76.76" width="1.0" height="1.5" fill="#dcdcdc" opacity=".68"/><rect x="15.0" y="76.76" width="7.0" height="1.5" fill="#d4d4d4" opacity=".68"/><rect x="23.0" y="76.76" width="1.0" height="1.5" fill="#778899" opacity=".68"/><rect x="25.0" y="76.76" width="9.0" height="1.5" fill="#d4d4d4" opacity=".68"/><rect x="34.0" y="76.76" width="1.0" height="1.5" fill="#dcdcdc" opacity=".68"/><rect x="35.0" y="76.76" width="7.0" height="1.5" fill="#d4d4d4" opacity=".68"/><rect x="6.0" y="78.78" width="3.0" height="1.5" fill="#569cd6"/><rect x="10.0" y="78.78" width="9.0" height="1.5" fill="#d4d4d4" opacity=".68"/><rect x="19.0" y="78.78" width="1.0" height="1.5" fill="#dcdcdc" opacity=".68"/><rect x="20.0" y="78.78" width="12.0" height="1.5" fill="#d4d4d4" opacity=".68"/><rect x="33.0" y="78.78" width="1.0" height="1.5" fill="#778899" opacity=".68"/><rect x="35.0" y="78.78" width="6.0" height="1.5" fill="#d4d4d4" opacity=".68"/><rect x="41.0" y="78.78" width="1.0" height="1.5" fill="#dcdcdc" opacity=".68"/><rect x="42.0" y="78.78" width="12.0" height="1.5" fill="#d4d4d4" opacity=".68"/><rect x="6.0" y="80.80" width="3.0" height="1.5" fill="#569cd6"/><rect x="10.0" y="80.80" width="6.0" height="1.5" fill="#d4d4d4" opacity=".68"/><rect x="16.0" y="80.80" width="1.0" height="1.5" fill="#dcdcdc" opacity=".68"/><rect x="17.0" y="80.80" width="11.0" height="1.5" fill="#d4d4d4" opacity=".68"/><rect x="29.0" y="80.80" width="2.0" height="1.5" fill="#778899" opacity=".68"/><rect x="32.0" y="80.80" width="16.0" height="1.5" fill="#d4d4d4" opacity=".68"/><rect x="6.0" y="82.82" width="3.0" height="1.5" fill="#569cd6"/><rect x="10.0" y="82.82" width="6.0" height="1.5" fill="#d4d4d4" opacity=".68"/><rect x="16.0" y="82.82" width="1.0" height="1.5" fill="#dcdcdc" opacity=".68"/><rect x="17.0" y="82.82" width="11.0" height="1.5" fill="#d4d4d4" opacity=".68"/><rect x="29.0" y="82.82" width="1.0" height="1.5" fill="#778899" opacity=".68"/><rect x="31.0" y="82.82" width="13.0" height="1.5" fill="#d4d4d4" opacity=".68"/><rect x="44.0" y="82.82" width="1.0" height="1.5" fill="#dcdcdc" opacity=".68"/><rect x="2.0" y="88.88" width="6.0" height="1.5" fill="#569cd6"/><rect x="9.0" y="88.88" width="6.0" height="1.5" fill="#ff00ff"/><rect x="15.0" y="88.88" width="1.0" height="1.5" fill="#dcdcdc" opacity=".68"/><rect x="16.0" y="88.88" width="3.0" height="1.5" fill="#ff00ff"/><rect x="19.0" y="88.88" width="1.0" height="1.5" fill="#dcdcdc" opacity=".68"/><rect x="20.0" y="88.88" width="7.0" height="1.5" fill="#d4d4d4" opacity=".68"/><rect x="27.0" y="88.88" width="1.0" height="1.5" fill="#dcdcdc" opacity=".68"/><rect x="28.0" y="88.88" width="6.0" height="1.5" fill="#d4d4d4" opacity=".68"/><rect x="34.0" y="88.88" width="2.0" height="1.5" fill="#dcdcdc" opacity=".68"/><rect x="36.0" y="88.88" width="1.0" height="1.5" fill="#b5cea8" opacity=".68"/><rect x="37.0" y="88.88" width="1.0" height="1.5" fill="#dcdcdc" opacity=".68"/><rect x="39.0" y="88.88" width="4.0" height="1.5" fill="#569cd6"/><rect x="44.0" y="88.88" width="10.0" height="1.5" fill="#d4d4d4" opacity=".68"/><rect x="4.0" y="90.90" width="4.0" height="1.5" fill="#569cd6"/><rect x="9.0" y="90.90" width="7.0" height="1.5" fill="#d4d4d4" opacity=".68"/><rect x="4.0" y="94.94" width="5.0" height="1.5" fill="#569cd6"/><rect x="10.0" y="94.94" width="7.0" height="1.5" fill="#d4d4d4" opacity=".68"/><rect x="17.0" y="94.94" width="1.0" height="1.5" fill="#dcdcdc" opacity=".68"/><rect x="18.0" y="94.94" width="12.0" height="1.5" fill="#d4d4d4" opacity=".68"/><rect x="31.0" y="94.94" width="2.0" height="1.5" fill="#778899" opacity=".68"/><rect x="34.0" y="94.94" width="16.0" height="1.5" fill="#d4d4d4" opacity=".68"/><rect x="4.0" y="96.96" width="3.0" height="1.5" fill="#569cd6"/><rect x="8.0" y="96.96" width="7.0" height="1.5" fill="#d4d4d4" opacity=".68"/><rect x="15.0" y="96.96" width="1.0" height="1.5" fill="#dcdcdc" opacity=".68"/><rect x="16.0" y="96.96" width="11.0" height="1.5" fill="#d4d4d4" opacity=".68"/><rect x="28.0" y="96.96" width="1.0" height="1.5" fill="#778899" opacity=".68"/><rect x="30.0" y="96.96" width="13.0" height="1.5" fill="#d4d4d4" opacity=".68"/><rect x="43.0" y="96.96" width="1.0" height="1.5" fill="#dcdcdc" opacity=".68"/><rect x="2.0" y="101.00" width="6.0" height="1.5" fill="#569cd6"/><rect x="9.0" y="101.00" width="10.0" height="1.5" fill="#d4d4d4" opacity=".68"/><rect x="20.0" y="101.00" width="1.0" height="1.5" fill="#778899" opacity=".68"/><rect x="22.0" y="101.00" width="10.0" height="1.5" fill="#d4d4d4" opacity=".68"/><rect x="33.0" y="101.00" width="1.0" height="1.5" fill="#778899" opacity=".68"/><rect x="35.0" y="101.00" width="10.0" height="1.5" fill="#d4d4d4" opacity=".68"/><rect x="45.0" y="101.00" width="1.0" height="1.5" fill="#dcdcdc" opacity=".68"/><rect x="0.0" y="103.02" width="3.0" height="1.5" fill="#569cd6"/></g></svg>
<i class="vr" style="left:802px"></i>
<i class="sl" style="left:803px;width:18px"></i>
</div>
<div class="ed" id="edR" style="left:1022px;top:304px;width:789px;height:675px">
<div class="cl" style="left:86.9px;top:0;width:613.1px"></div>
<div class="ln a" style="top:0.00px;width:52.199999999999996px">1</div>
<div class="r" style="top:0.00px;left:86.9px"><span class="k">CREATE</span> <span class="c">/*DEFINER=`root`@`%`*/</span> <span class="k">FUNCTION</span> <span class="i">sakila</span><span class="d">.</span></div>
<div class="r" style="top:25.65px;left:86.9px"><span class="i">get_customer_balance</span><span class="d">(</span><span class="i">p_customer_id</span> <span class="k">INT</span><span class="d">,</span> <span class="i">p_effective_date</span> </div>
<div class="r" style="top:51.30px;left:86.9px"><span class="k">DATETIME</span><span class="d">)</span> <span class="k">RETURN</span> <span class="k">decimal</span><span class="d">(</span><span class="n">5</span><span class="d">,</span><span class="n">2</span><span class="d">)</span></div>
<div class="ln" style="top:76.95px;width:52.199999999999996px">2</div>
<i class="g" style="left:87.2px;top:77px;height:26px"></i>
<div class="r" style="top:76.95px;left:86.9px">    <span class="k">READS</span> <span class="k">SQL</span> <span class="k">DATA</span></div>
<div class="ln" style="top:102.60px;width:52.199999999999996px">3</div>
<i class="g" style="left:87.2px;top:103px;height:25px"></i>
<div class="r" style="top:102.60px;left:86.9px">    <span class="c">/*DETERMINISTIC*/</span></div>
<div class="ln" style="top:128.25px;width:52.199999999999996px">4</div>
<div class="r" style="top:128.25px;left:86.9px"><span class="k">AS</span></div>
<div class="ln" style="top:153.90px;width:52.199999999999996px">5</div>
<div class="r" style="top:153.90px;left:86.9px"><span class="k">DECLARE</span> <span class="i">v_rentfees</span> <span class="k">DECIMAL</span><span class="d">(</span><span class="n">5</span><span class="d">,</span><span class="n">2</span><span class="d">);</span></div>
<div class="ln" style="top:179.55px;width:52.199999999999996px">6</div>
<div class="r" style="top:179.55px;left:86.9px"><span class="k">DECLARE</span> <span class="i">v_overfees</span> <span class="k">INTEGER</span><span class="d">;</span></div>
<div class="ln" style="top:205.20px;width:52.199999999999996px">7</div>
<div class="r" style="top:205.20px;left:86.9px"><span class="k">DECLARE</span> <span class="i">v_payments</span> <span class="k">DECIMAL</span><span class="d">(</span><span class="n">5</span><span class="d">,</span><span class="n">2</span><span class="d">);</span></div>
<div class="ln" style="top:230.85px;width:52.199999999999996px">8</div>
<div class="r" style="top:230.85px;left:86.9px"><span class="k">BEGIN</span></div>
<div class="ln" style="top:256.50px;width:52.199999999999996px">9</div>
<i class="g" style="left:87.2px;top:256px;height:26px"></i>
<div class="ln" style="top:282.15px;width:52.199999999999996px">10</div>
<i class="g" style="left:87.2px;top:282px;height:26px"></i>
<i class="g" style="left:128.8px;top:282px;height:26px"></i>
<div class="r" style="top:282.15px;left:86.9px">       <span class="c">/*OK, WE NEED TO CALCULATE THE CURRENT BALANCE </span></div>
<div class="r" style="top:307.80px;left:86.9px"><span class="c">GIVEN A CUSTOMER_ID AND A DATE*/</span></div>
<div class="ln" style="top:333.45px;width:52.199999999999996px">11</div>
<i class="g" style="left:87.2px;top:333px;height:26px"></i>
<i class="g" style="left:128.8px;top:333px;height:26px"></i>
<div class="r" style="top:333.45px;left:86.9px">       <span class="c">/*THAT WE WANT THE BALANCE TO BE EFFECTIVE FOR. </span></div>
<div class="r" style="top:359.10px;left:86.9px"><span class="c">THE BALANCE IS:*/</span></div>
<div class="ln" style="top:384.75px;width:52.199999999999996px">12</div>
<i class="g" style="left:87.2px;top:385px;height:25px"></i>
<i class="g" style="left:128.8px;top:385px;height:25px"></i>
<div class="r" style="top:384.75px;left:86.9px">       <span class="c">/*   1) RENTAL FEES FOR ALL PREVIOUS RENTALS*/</span></div>
<div class="ln" style="top:410.40px;width:52.199999999999996px">13</div>
<i class="g" style="left:87.2px;top:410px;height:26px"></i>
<i class="g" style="left:128.8px;top:410px;height:26px"></i>
<div class="r" style="top:410.40px;left:86.9px">       <span class="c">/*   2) ONE DOLLAR FOR EVERY DAY THE PREVIOUS </span></div>
<div class="r" style="top:436.05px;left:86.9px"><span class="c">RENTALS ARE OVERDUE*/</span></div>
<div class="ln" style="top:461.70px;width:52.199999999999996px">14</div>
<i class="g" style="left:87.2px;top:462px;height:25px"></i>
<i class="g" style="left:128.8px;top:462px;height:25px"></i>
<div class="r" style="top:461.70px;left:86.9px">       <span class="c">/*   3) IF A FILM IS MORE THAN RENTAL_DURATION * 2 </span></div>
<div class="r" style="top:487.35px;left:86.9px"><span class="c">OVERDUE, CHARGE THE REPLACEMENT_COST*/</span></div>
<div class="ln" style="top:513.00px;width:52.199999999999996px">15</div>
<i class="g" style="left:87.2px;top:513px;height:26px"></i>
<i class="g" style="left:128.8px;top:513px;height:26px"></i>
<div class="r" style="top:513.00px;left:86.9px">       <span class="c">/*   4) SUBTRACT ALL PAYMENTS MADE BEFORE THE DATE </span></div>
<div class="r" style="top:538.65px;left:86.9px"><span class="c">SPECIFIED*/</span></div>
<div class="ln" style="top:564.30px;width:52.199999999999996px">16</div>
<i class="g" style="left:87.2px;top:564px;height:26px"></i>
<div class="ln" style="top:589.95px;width:52.199999999999996px">17</div>
<i class="g" style="left:87.2px;top:590px;height:26px"></i>
<div class="r" style="top:589.95px;left:86.9px">  <span class="k">SELECT</span> <span class="f">IFNULL</span><span class="d">(</span><span class="f">SUM</span><span class="d">(</span><span class="i">film</span><span class="d">.</span><span class="i">rental_rate</span><span class="d">),</span><span class="n">0</span><span class="d">)</span> <span class="k">INTO</span> <span class="i">v_rentfees</span></div>
<div class="ln" style="top:615.60px;width:52.199999999999996px">18</div>
<i class="g" style="left:87.2px;top:616px;height:25px"></i>
<div class="r" style="top:615.60px;left:86.9px">    <span class="k">FROM</span> <span class="i">film</span><span class="d">,</span> <span class="i">inventory</span><span class="d">,</span> <span class="i">rental</span></div>
<div class="ln" style="top:641.25px;width:52.199999999999996px">19</div>
<i class="g" style="left:87.2px;top:641px;height:26px"></i>
<div class="r" style="top:641.25px;left:86.9px">    <span class="k">WHERE</span> <span class="i">film</span><span class="d">.</span><span class="i">film_id</span> <span class="o">=</span> <span class="i">inventory</span><span class="d">.</span><span class="i">film_id</span></div>
<div class="ln" style="top:666.90px;width:52.199999999999996px">20</div>
<i class="g" style="left:87.2px;top:667px;height:26px"></i>
<i class="g" style="left:128.8px;top:667px;height:26px"></i>
<div class="r" style="top:666.90px;left:86.9px">      <span class="k">AND</span> <span class="i">inventory</span><span class="d">.</span><span class="i">inventory_id</span> <span class="o">=</span> <span class="i">rental</span><span class="d">.</span><span class="i">inventory_id</span></div>
<div class="ln" style="top:692.55px;width:52.199999999999996px">21</div>
<i class="g" style="left:87.2px;top:693px;height:25px"></i>
<i class="g" style="left:128.8px;top:693px;height:25px"></i>
<div class="r" style="top:692.55px;left:86.9px">      <span class="k">AND</span> <span class="i">rental</span><span class="d">.</span><span class="i">rental_date</span> <span class="o">&lt;=</span> <span class="i">p_effective_date</span></div>
<svg class="mm" style="left:708px" width="70" height="107" viewBox="0 0 70 107"><rect x="0" y="0" width="66" height="2" fill="#264f78" opacity=".4"/><g opacity=".78"><rect x="0.0" y="0.00" width="6.0" height="1.5" fill="#569cd6"/><rect x="7.0" y="0.00" width="22.0" height="1.5" fill="#608b4e"/><rect x="30.0" y="0.00" width="8.0" height="1.5" fill="#569cd6"/><rect x="39.0" y="0.00" width="6.0" height="1.5" fill="#d4d4d4" opacity=".68"/><rect x="45.0" y="0.00" width="1.0" height="1.5" fill="#dcdcdc" opacity=".68"/><rect x="0.0" y="2.02" width="20.0" height="1.5" fill="#d4d4d4" opacity=".68"/><rect x="20.0" y="2.02" width="1.0" height="1.5" fill="#dcdcdc" opacity=".68"/><rect x="21.0" y="2.02" width="13.0" height="1.5" fill="#d4d4d4" opacity=".68"/><rect x="35.0" y="2.02" width="3.0" height="1.5" fill="#569cd6"/><rect x="38.0" y="2.02" width="1.0" height="1.5" fill="#dcdcdc" opacity=".68"/><rect x="40.0" y="2.02" width="16.0" height="1.5" fill="#d4d4d4" opacity=".68"/><rect x="0.0" y="4.04" width="8.0" height="1.5" fill="#569cd6"/><rect x="8.0" y="4.04" width="1.0" height="1.5" fill="#dcdcdc" opacity=".68"/><rect x="10.0" y="4.04" width="6.0" height="1.5" fill="#569cd6"/><rect x="17.0" y="4.04" width="7.0" height="1.5" fill="#569cd6"/><rect x="24.0" y="4.04" width="1.0" height="1.5" fill="#dcdcdc" opacity=".68"/><rect x="25.0" y="4.04" width="1.0" height="1.5" fill="#b5cea8" opacity=".68"/><rect x="26.0" y="4.04" width="1.0" height="1.5" fill="#dcdcdc" opacity=".68"/><rect x="27.0" y="4.04" width="1.0" height="1.5" fill="#b5cea8" opacity=".68"/><rect x="28.0" y="4.04" width="1.0" height="1.5" fill="#dcdcdc" opacity=".68"/><rect x="4.0" y="6.06" width="5.0" height="1.5" fill="#569cd6"/><rect x="10.0" y="6.06" width="3.0" height="1.5" fill="#569cd6"/><rect x="14.0" y="6.06" width="4.0" height="1.5" fill="#569cd6"/><rect x="4.0" y="8.08" width="17.0" height="1.5" fill="#608b4e"/><rect x="0.0" y="10.10" width="2.0" height="1.5" fill="#569cd6"/><rect x="0.0" y="12.12" width="7.0" height="1.5" fill="#569cd6"/><rect x="8.0" y="12.12" width="10.0" height="1.5" fill="#d4d4d4" opacity=".68"/><rect x="19.0" y="12.12" width="7.0" height="1.5" fill="#569cd6"/><rect x="26.0" y="12.12" width="1.0" height="1.5" fill="#dcdcdc" opacity=".68"/><rect x="27.0" y="12.12" width="1.0" height="1.5" fill="#b5cea8" opacity=".68"/><rect x="28.0" y="12.12" width="1.0" height="1.5" fill="#dcdcdc" opacity=".68"/><rect x="29.0" y="12.12" width="1.0" height="1.5" fill="#b5cea8" opacity=".68"/><rect x="30.0" y="12.12" width="2.0" height="1.5" fill="#dcdcdc" opacity=".68"/><rect x="0.0" y="14.14" width="7.0" height="1.5" fill="#569cd6"/><rect x="8.0" y="14.14" width="10.0" height="1.5" fill="#d4d4d4" opacity=".68"/><rect x="19.0" y="14.14" width="7.0" height="1.5" fill="#569cd6"/><rect x="26.0" y="14.14" width="1.0" height="1.5" fill="#dcdcdc" opacity=".68"/><rect x="0.0" y="16.16" width="7.0" height="1.5" fill="#569cd6"/><rect x="8.0" y="16.16" width="10.0" height="1.5" fill="#d4d4d4" opacity=".68"/><rect x="19.0" y="16.16" width="7.0" height="1.5" fill="#569cd6"/><rect x="26.0" y="16.16" width="1.0" height="1.5" fill="#dcdcdc" opacity=".68"/><rect x="27.0" y="16.16" width="1.0" height="1.5" fill="#b5cea8" opacity=".68"/><rect x="28.0" y="16.16" width="1.0" height="1.5" fill="#dcdcdc" opacity=".68"/><rect x="29.0" y="16.16" width="1.0" height="1.5" fill="#b5cea8" opacity=".68"/><rect x="30.0" y="16.16" width="2.0" height="1.5" fill="#dcdcdc" opacity=".68"/><rect x="0.0" y="18.18" width="5.0" height="1.5" fill="#569cd6"/><rect x="7.0" y="22.22" width="5.0" height="1.5" fill="#608b4e"/><rect x="13.0" y="22.22" width="2.0" height="1.5" fill="#608b4e"/><rect x="16.0" y="22.22" width="4.0" height="1.5" fill="#608b4e"/><rect x="21.0" y="22.22" width="2.0" height="1.5" fill="#608b4e"/><rect x="24.0" y="22.22" width="9.0" height="1.5" fill="#608b4e"/><rect x="34.0" y="22.22" width="3.0" height="1.5" fill="#608b4e"/><rect x="38.0" y="22.22" width="7.0" height="1.5" fill="#608b4e"/><rect x="46.0" y="22.22" width="7.0" height="1.5" fill="#608b4e"/><rect x="0.0" y="24.24" width="5.0" height="1.5" fill="#608b4e"/><rect x="6.0" y="24.24" width="1.0" height="1.5" fill="#608b4e"/><rect x="8.0" y="24.24" width="11.0" height="1.5" fill="#608b4e"/><rect x="20.0" y="24.24" width="3.0" height="1.5" fill="#608b4e"/><rect x="24.0" y="24.24" width="1.0" height="1.5" fill="#608b4e"/><rect x="26.0" y="24.24" width="6.0" height="1.5" fill="#608b4e"/><rect x="7.0" y="26.26" width="6.0" height="1.5" fill="#608b4e"/><rect x="14.0" y="26.26" width="2.0" height="1.5" fill="#608b4e"/><rect x="17.0" y="26.26" width="4.0" height="1.5" fill="#608b4e"/><rect x="22.0" y="26.26" width="3.0" height="1.5" fill="#608b4e"/><rect x="26.0" y="26.26" width="7.0" height="1.5" fill="#608b4e"/><rect x="34.0" y="26.26" width="2.0" height="1.5" fill="#608b4e"/><rect x="37.0" y="26.26" width="2.0" height="1.5" fill="#608b4e"/><rect x="40.0" y="26.26" width="9.0" height="1.5" fill="#608b4e"/><rect x="50.0" y="26.26" width="4.0" height="1.5" fill="#608b4e"/><rect x="0.0" y="28.28" width="3.0" height="1.5" fill="#608b4e"/><rect x="4.0" y="28.28" width="7.0" height="1.5" fill="#608b4e"/><rect x="12.0" y="28.28" width="5.0" height="1.5" fill="#608b4e"/><rect x="7.0" y="30.30" width="2.0" height="1.5" fill="#608b4e"/><rect x="12.0" y="30.30" width="2.0" height="1.5" fill="#608b4e"/><rect x="15.0" y="30.30" width="6.0" height="1.5" fill="#608b4e"/><rect x="22.0" y="30.30" width="4.0" height="1.5" fill="#608b4e"/><rect x="27.0" y="30.30" width="3.0" height="1.5" fill="#608b4e"/><rect x="31.0" y="30.30" width="3.0" height="1.5" fill="#608b4e"/><rect x="35.0" y="30.30" width="8.0" height="1.5" fill="#608b4e"/><rect x="44.0" y="30.30" width="9.0" height="1.5" fill="#608b4e"/><rect x="7.0" y="32.32" width="2.0" height="1.5" fill="#608b4e"/><rect x="12.0" y="32.32" width="2.0" height="1.5" fill="#608b4e"/><rect x="15.0" y="32.32" width="3.0" height="1.5" fill="#608b4e"/><rect x="19.0" y="32.32" width="6.0" height="1.5" fill="#608b4e"/><rect x="26.0" y="32.32" width="3.0" height="1.5" fill="#608b4e"/><rect x="30.0" y="32.32" width="5.0" height="1.5" fill="#608b4e"/><rect x="36.0" y="32.32" width="3.0" height="1.5" fill="#608b4e"/><rect x="40.0" y="32.32" width="3.0" height="1.5" fill="#608b4e"/><rect x="44.0" y="32.32" width="8.0" height="1.5" fill="#608b4e"/><rect x="0.0" y="34.34" width="7.0" height="1.5" fill="#608b4e"/><rect x="8.0" y="34.34" width="3.0" height="1.5" fill="#608b4e"/><rect x="12.0" y="34.34" width="9.0" height="1.5" fill="#608b4e"/><rect x="7.0" y="36.36" width="2.0" height="1.5" fill="#608b4e"/><rect x="12.0" y="36.36" width="2.0" height="1.5" fill="#608b4e"/><rect x="15.0" y="36.36" width="2.0" height="1.5" fill="#608b4e"/><rect x="18.0" y="36.36" width="1.0" height="1.5" fill="#608b4e"/><rect x="20.0" y="36.36" width="4.0" height="1.5" fill="#608b4e"/><rect x="25.0" y="36.36" width="2.0" height="1.5" fill="#608b4e"/><rect x="28.0" y="36.36" width="4.0" height="1.5" fill="#608b4e"/><rect x="33.0" y="36.36" width="4.0" height="1.5" fill="#608b4e"/><rect x="38.0" y="36.36" width="15.0" height="1.5" fill="#608b4e"/><rect x="54.0" y="36.36" width="1.0" height="1.5" fill="#608b4e"/><rect x="56.0" y="36.36" width="1.0" height="1.5" fill="#608b4e"/><rect x="0.0" y="38.38" width="8.0" height="1.5" fill="#608b4e"/><rect x="9.0" y="38.38" width="6.0" height="1.5" fill="#608b4e"/><rect x="16.0" y="38.38" width="3.0" height="1.5" fill="#608b4e"/><rect x="20.0" y="38.38" width="18.0" height="1.5" fill="#608b4e"/><rect x="7.0" y="40.40" width="2.0" height="1.5" fill="#608b4e"/><rect x="12.0" y="40.40" width="2.0" height="1.5" fill="#608b4e"/><rect x="15.0" y="40.40" width="8.0" height="1.5" fill="#608b4e"/><rect x="24.0" y="40.40" width="3.0" height="1.5" fill="#608b4e"/><rect x="28.0" y="40.40" width="8.0" height="1.5" fill="#608b4e"/><rect x="37.0" y="40.40" width="4.0" height="1.5" fill="#608b4e"/><rect x="42.0" y="40.40" width="6.0" height="1.5" fill="#608b4e"/><rect x="49.0" y="40.40" width="3.0" height="1.5" fill="#608b4e"/><rect x="53.0" y="40.40" width="4.0" height="1.5" fill="#608b4e"/><rect x="0.0" y="42.42" width="11.0" height="1.5" fill="#608b4e"/><rect x="2.0" y="46.46" width="6.0" height="1.5" fill="#569cd6"/><rect x="9.0" y="46.46" width="6.0" height="1.5" fill="#ff00ff"/><rect x="15.0" y="46.46" width="1.0" height="1.5" fill="#dcdcdc" opacity=".68"/><rect x="16.0" y="46.46" width="3.0" height="1.5" fill="#ff00ff"/><rect x="19.0" y="46.46" width="1.0" height="1.5" fill="#dcdcdc" opacity=".68"/><rect x="20.0" y="46.46" width="4.0" height="1.5" fill="#d4d4d4" opacity=".68"/><rect x="24.0" y="46.46" width="1.0" height="1.5" fill="#dcdcdc" opacity=".68"/><rect x="25.0" y="46.46" width="11.0" height="1.5" fill="#d4d4d4" opacity=".68"/><rect x="36.0" y="46.46" width="2.0" height="1.5" fill="#dcdcdc" opacity=".68"/><rect x="38.0" y="46.46" width="1.0" height="1.5" fill="#b5cea8" opacity=".68"/><rect x="39.0" y="46.46" width="1.0" height="1.5" fill="#dcdcdc" opacity=".68"/><rect x="41.0" y="46.46" width="4.0" height="1.5" fill="#569cd6"/><rect x="46.0" y="46.46" width="10.0" height="1.5" fill="#d4d4d4" opacity=".68"/><rect x="4.0" y="48.48" width="4.0" height="1.5" fill="#569cd6"/><rect x="9.0" y="48.48" width="4.0" height="1.5" fill="#d4d4d4" opacity=".68"/><rect x="13.0" y="48.48" width="1.0" height="1.5" fill="#dcdcdc" opacity=".68"/><rect x="15.0" y="48.48" width="9.0" height="1.5" fill="#d4d4d4" opacity=".68"/><rect x="24.0" y="48.48" width="1.0" height="1.5" fill="#dcdcdc" opacity=".68"/><rect x="26.0" y="48.48" width="6.0" height="1.5" fill="#d4d4d4" opacity=".68"/><rect x="4.0" y="50.50" width="5.0" height="1.5" fill="#569cd6"/><rect x="10.0" y="50.50" width="4.0" height="1.5" fill="#d4d4d4" opacity=".68"/><rect x="14.0" y="50.50" width="1.0" height="1.5" fill="#dcdcdc" opacity=".68"/><rect x="15.0" y="50.50" width="7.0" height="1.5" fill="#d4d4d4" opacity=".68"/><rect x="23.0" y="50.50" width="1.0" height="1.5" fill="#778899" opacity=".68"/><rect x="25.0" y="50.50" width="9.0" height="1.5" fill="#d4d4d4" opacity=".68"/><rect x="34.0" y="50.50" width="1.0" height="1.5" fill="#dcdcdc" opacity=".68"/><rect x="35.0" y="50.50" width="7.0" height="1.5" fill="#d4d4d4" opacity=".68"/><rect x="6.0" y="52.52" width="3.0" height="1.5" fill="#569cd6"/><rect x="10.0" y="52.52" width="9.0" height="1.5" fill="#d4d4d4" opacity=".68"/><rect x="19.0" y="52.52" width="1.0" height="1.5" fill="#dcdcdc" opacity=".68"/><rect x="20.0" y="52.52" width="12.0" height="1.5" fill="#d4d4d4" opacity=".68"/><rect x="33.0" y="52.52" width="1.0" height="1.5" fill="#778899" opacity=".68"/><rect x="35.0" y="52.52" width="6.0" height="1.5" fill="#d4d4d4" opacity=".68"/><rect x="41.0" y="52.52" width="1.0" height="1.5" fill="#dcdcdc" opacity=".68"/><rect x="42.0" y="52.52" width="12.0" height="1.5" fill="#d4d4d4" opacity=".68"/><rect x="6.0" y="54.54" width="3.0" height="1.5" fill="#569cd6"/><rect x="10.0" y="54.54" width="6.0" height="1.5" fill="#d4d4d4" opacity=".68"/><rect x="16.0" y="54.54" width="1.0" height="1.5" fill="#dcdcdc" opacity=".68"/><rect x="17.0" y="54.54" width="11.0" height="1.5" fill="#d4d4d4" opacity=".68"/><rect x="29.0" y="54.54" width="2.0" height="1.5" fill="#778899" opacity=".68"/><rect x="32.0" y="54.54" width="16.0" height="1.5" fill="#d4d4d4" opacity=".68"/><rect x="6.0" y="56.56" width="3.0" height="1.5" fill="#569cd6"/><rect x="10.0" y="56.56" width="6.0" height="1.5" fill="#d4d4d4" opacity=".68"/><rect x="16.0" y="56.56" width="1.0" height="1.5" fill="#dcdcdc" opacity=".68"/><rect x="17.0" y="56.56" width="11.0" height="1.5" fill="#d4d4d4" opacity=".68"/><rect x="29.0" y="56.56" width="1.0" height="1.5" fill="#778899" opacity=".68"/><rect x="31.0" y="56.56" width="13.0" height="1.5" fill="#d4d4d4" opacity=".68"/><rect x="44.0" y="56.56" width="1.0" height="1.5" fill="#dcdcdc" opacity=".68"/><rect x="2.0" y="60.60" width="6.0" height="1.5" fill="#569cd6"/><rect x="9.0" y="60.60" width="6.0" height="1.5" fill="#ff00ff"/><rect x="15.0" y="60.60" width="1.0" height="1.5" fill="#dcdcdc" opacity=".68"/><rect x="16.0" y="60.60" width="3.0" height="1.5" fill="#ff00ff"/><rect x="19.0" y="60.60" width="1.0" height="1.5" fill="#dcdcdc" opacity=".68"/><rect x="20.0" y="60.60" width="2.0" height="1.5" fill="#569cd6"/><rect x="22.0" y="60.60" width="2.0" height="1.5" fill="#dcdcdc" opacity=".68"/><rect x="24.0" y="60.60" width="7.0" height="1.5" fill="#ff00ff"/><rect x="31.0" y="60.60" width="1.0" height="1.5" fill="#dcdcdc" opacity=".68"/><rect x="32.0" y="60.60" width="6.0" height="1.5" fill="#d4d4d4" opacity=".68"/><rect x="38.0" y="60.60" width="1.0" height="1.5" fill="#dcdcdc" opacity=".68"/><rect x="39.0" y="60.60" width="11.0" height="1.5" fill="#d4d4d4" opacity=".68"/><rect x="50.0" y="60.60" width="1.0" height="1.5" fill="#dcdcdc" opacity=".68"/><rect x="52.0" y="60.60" width="1.0" height="1.5" fill="#778899" opacity=".68"/><rect x="0.0" y="62.62" width="7.0" height="1.5" fill="#ff00ff"/><rect x="7.0" y="62.62" width="1.0" height="1.5" fill="#dcdcdc" opacity=".68"/><rect x="8.0" y="62.62" width="6.0" height="1.5" fill="#d4d4d4" opacity=".68"/><rect x="14.0" y="62.62" width="1.0" height="1.5" fill="#dcdcdc" opacity=".68"/><rect x="15.0" y="62.62" width="11.0" height="1.5" fill="#d4d4d4" opacity=".68"/><rect x="26.0" y="62.62" width="2.0" height="1.5" fill="#dcdcdc" opacity=".68"/><rect x="29.0" y="62.62" width="1.0" height="1.5" fill="#778899" opacity=".68"/><rect x="31.0" y="62.62" width="4.0" height="1.5" fill="#d4d4d4" opacity=".68"/><rect x="35.0" y="62.62" width="1.0" height="1.5" fill="#dcdcdc" opacity=".68"/><rect x="36.0" y="62.62" width="15.0" height="1.5" fill="#d4d4d4" opacity=".68"/><rect x="51.0" y="62.62" width="1.0" height="1.5" fill="#dcdcdc" opacity=".68"/><rect x="8.0" y="64.64" width="2.0" height="1.5" fill="#dcdcdc" opacity=".68"/><rect x="10.0" y="64.64" width="7.0" height="1.5" fill="#ff00ff"/><rect x="17.0" y="64.64" width="1.0" height="1.5" fill="#dcdcdc" opacity=".68"/><rect x="18.0" y="64.64" width="6.0" height="1.5" fill="#d4d4d4" opacity=".68"/><rect x="24.0" y="64.64" width="1.0" height="1.5" fill="#dcdcdc" opacity=".68"/><rect x="25.0" y="64.64" width="11.0" height="1.5" fill="#d4d4d4" opacity=".68"/><rect x="36.0" y="64.64" width="1.0" height="1.5" fill="#dcdcdc" opacity=".68"/><rect x="38.0" y="64.64" width="1.0" height="1.5" fill="#778899" opacity=".68"/><rect x="40.0" y="64.64" width="7.0" height="1.5" fill="#ff00ff"/><rect x="47.0" y="64.64" width="1.0" height="1.5" fill="#dcdcdc" opacity=".68"/><rect x="48.0" y="64.64" width="6.0" height="1.5" fill="#d4d4d4" opacity=".68"/><rect x="54.0" y="64.64" width="1.0" height="1.5" fill="#dcdcdc" opacity=".68"/><rect x="0.0" y="66.66" width="11.0" height="1.5" fill="#d4d4d4" opacity=".68"/><rect x="11.0" y="66.66" width="2.0" height="1.5" fill="#dcdcdc" opacity=".68"/><rect x="14.0" y="66.66" width="1.0" height="1.5" fill="#778899" opacity=".68"/><rect x="16.0" y="66.66" width="4.0" height="1.5" fill="#d4d4d4" opacity=".68"/><rect x="20.0" y="66.66" width="1.0" height="1.5" fill="#dcdcdc" opacity=".68"/><rect x="21.0" y="66.66" width="15.0" height="1.5" fill="#d4d4d4" opacity=".68"/><rect x="36.0" y="66.66" width="2.0" height="1.5" fill="#dcdcdc" opacity=".68"/><rect x="38.0" y="66.66" width="1.0" height="1.5" fill="#b5cea8" opacity=".68"/><rect x="39.0" y="66.66" width="3.0" height="1.5" fill="#dcdcdc" opacity=".68"/><rect x="42.0" y="66.66" width="1.0" height="1.5" fill="#b5cea8" opacity=".68"/><rect x="43.0" y="66.66" width="1.0" height="1.5" fill="#dcdcdc" opacity=".68"/><rect x="45.0" y="66.66" width="4.0" height="1.5" fill="#569cd6"/><rect x="0.0" y="68.68" width="10.0" height="1.5" fill="#d4d4d4" opacity=".68"/><rect x="4.0" y="70.70" width="4.0" height="1.5" fill="#569cd6"/><rect x="9.0" y="70.70" width="6.0" height="1.5" fill="#d4d4d4" opacity=".68"/><rect x="15.0" y="70.70" width="1.0" height="1.5" fill="#dcdcdc" opacity=".68"/><rect x="17.0" y="70.70" width="9.0" height="1.5" fill="#d4d4d4" opacity=".68"/><rect x="26.0" y="70.70" width="1.0" height="1.5" fill="#dcdcdc" opacity=".68"/><rect x="28.0" y="70.70" width="4.0" height="1.5" fill="#d4d4d4" opacity=".68"/><rect x="4.0" y="72.72" width="5.0" height="1.5" fill="#569cd6"/><rect x="10.0" y="72.72" width="4.0" height="1.5" fill="#d4d4d4" opacity=".68"/><rect x="14.0" y="72.72" width="1.0" height="1.5" fill="#dcdcdc" opacity=".68"/><rect x="15.0" y="72.72" width="7.0" height="1.5" fill="#d4d4d4" opacity=".68"/><rect x="23.0" y="72.72" width="1.0" height="1.5" fill="#778899" opacity=".68"/><rect x="25.0" y="72.72" width="9.0" height="1.5" fill="#d4d4d4" opacity=".68"/><rect x="34.0" y="72.72" width="1.0" height="1.5" fill="#dcdcdc" opacity=".68"/><rect x="35.0" y="72.72" width="7.0" height="1.5" fill="#d4d4d4" opacity=".68"/><rect x="6.0" y="74.74" width="3.0" height="1.5" fill="#569cd6"/><rect x="10.0" y="74.74" width="9.0" height="1.5" fill="#d4d4d4" opacity=".68"/><rect x="19.0" y="74.74" width="1.0" height="1.5" fill="#dcdcdc" opacity=".68"/><rect x="20.0" y="74.74" width="12.0" height="1.5" fill="#d4d4d4" opacity=".68"/><rect x="33.0" y="74.74" width="1.0" height="1.5" fill="#778899" opacity=".68"/><rect x="35.0" y="74.74" width="6.0" height="1.5" fill="#d4d4d4" opacity=".68"/><rect x="41.0" y="74.74" width="1.0" height="1.5" fill="#dcdcdc" opacity=".68"/><rect x="42.0" y="74.74" width="12.0" height="1.5" fill="#d4d4d4" opacity=".68"/><rect x="6.0" y="76.76" width="3.0" height="1.5" fill="#569cd6"/><rect x="10.0" y="76.76" width="6.0" height="1.5" fill="#d4d4d4" opacity=".68"/><rect x="16.0" y="76.76" width="1.0" height="1.5" fill="#dcdcdc" opacity=".68"/><rect x="17.0" y="76.76" width="11.0" height="1.5" fill="#d4d4d4" opacity=".68"/><rect x="29.0" y="76.76" width="2.0" height="1.5" fill="#778899" opacity=".68"/><rect x="32.0" y="76.76" width="16.0" height="1.5" fill="#d4d4d4" opacity=".68"/><rect x="6.0" y="78.78" width="3.0" height="1.5" fill="#569cd6"/><rect x="10.0" y="78.78" width="6.0" height="1.5" fill="#d4d4d4" opacity=".68"/><rect x="16.0" y="78.78" width="1.0" height="1.5" fill="#dcdcdc" opacity=".68"/><rect x="17.0" y="78.78" width="11.0" height="1.5" fill="#d4d4d4" opacity=".68"/><rect x="29.0" y="78.78" width="1.0" height="1.5" fill="#778899" opacity=".68"/><rect x="31.0" y="78.78" width="13.0" height="1.5" fill="#d4d4d4" opacity=".68"/><rect x="44.0" y="78.78" width="1.0" height="1.5" fill="#dcdcdc" opacity=".68"/><rect x="2.0" y="84.84" width="6.0" height="1.5" fill="#569cd6"/><rect x="9.0" y="84.84" width="6.0" height="1.5" fill="#ff00ff"/><rect x="15.0" y="84.84" width="1.0" height="1.5" fill="#dcdcdc" opacity=".68"/><rect x="16.0" y="84.84" width="3.0" height="1.5" fill="#ff00ff"/><rect x="19.0" y="84.84" width="1.0" height="1.5" fill="#dcdcdc" opacity=".68"/><rect x="20.0" y="84.84" width="7.0" height="1.5" fill="#d4d4d4" opacity=".68"/><rect x="27.0" y="84.84" width="1.0" height="1.5" fill="#dcdcdc" opacity=".68"/><rect x="28.0" y="84.84" width="6.0" height="1.5" fill="#d4d4d4" opacity=".68"/><rect x="34.0" y="84.84" width="2.0" height="1.5" fill="#dcdcdc" opacity=".68"/><rect x="36.0" y="84.84" width="1.0" height="1.5" fill="#b5cea8" opacity=".68"/><rect x="37.0" y="84.84" width="1.0" height="1.5" fill="#dcdcdc" opacity=".68"/><rect x="39.0" y="84.84" width="4.0" height="1.5" fill="#569cd6"/><rect x="44.0" y="84.84" width="10.0" height="1.5" fill="#d4d4d4" opacity=".68"/><rect x="4.0" y="86.86" width="4.0" height="1.5" fill="#569cd6"/><rect x="9.0" y="86.86" width="7.0" height="1.5" fill="#d4d4d4" opacity=".68"/><rect x="4.0" y="90.90" width="5.0" height="1.5" fill="#569cd6"/><rect x="10.0" y="90.90" width="7.0" height="1.5" fill="#d4d4d4" opacity=".68"/><rect x="17.0" y="90.90" width="1.0" height="1.5" fill="#dcdcdc" opacity=".68"/><rect x="18.0" y="90.90" width="12.0" height="1.5" fill="#d4d4d4" opacity=".68"/><rect x="31.0" y="90.90" width="2.0" height="1.5" fill="#778899" opacity=".68"/><rect x="34.0" y="90.90" width="16.0" height="1.5" fill="#d4d4d4" opacity=".68"/><rect x="4.0" y="92.92" width="3.0" height="1.5" fill="#569cd6"/><rect x="8.0" y="92.92" width="7.0" height="1.5" fill="#d4d4d4" opacity=".68"/><rect x="15.0" y="92.92" width="1.0" height="1.5" fill="#dcdcdc" opacity=".68"/><rect x="16.0" y="92.92" width="11.0" height="1.5" fill="#d4d4d4" opacity=".68"/><rect x="28.0" y="92.92" width="1.0" height="1.5" fill="#778899" opacity=".68"/><rect x="30.0" y="92.92" width="13.0" height="1.5" fill="#d4d4d4" opacity=".68"/><rect x="43.0" y="92.92" width="1.0" height="1.5" fill="#dcdcdc" opacity=".68"/><rect x="2.0" y="96.96" width="6.0" height="1.5" fill="#569cd6"/><rect x="9.0" y="96.96" width="10.0" height="1.5" fill="#d4d4d4" opacity=".68"/><rect x="20.0" y="96.96" width="1.0" height="1.5" fill="#778899" opacity=".68"/><rect x="22.0" y="96.96" width="10.0" height="1.5" fill="#d4d4d4" opacity=".68"/><rect x="33.0" y="96.96" width="1.0" height="1.5" fill="#778899" opacity=".68"/><rect x="35.0" y="96.96" width="10.0" height="1.5" fill="#d4d4d4" opacity=".68"/><rect x="45.0" y="96.96" width="1.0" height="1.5" fill="#dcdcdc" opacity=".68"/><rect x="0.0" y="98.98" width="3.0" height="1.5" fill="#569cd6"/><rect x="3.0" y="98.98" width="1.0" height="1.5" fill="#dcdcdc" opacity=".68"/><rect x="0.0" y="101.00" width="5.0" height="1.5" fill="#569cd6"/><rect x="6.0" y="101.00" width="8.0" height="1.5" fill="#569cd6"/><rect x="15.0" y="101.00" width="6.0" height="1.5" fill="#d4d4d4" opacity=".68"/><rect x="21.0" y="101.00" width="1.0" height="1.5" fill="#dcdcdc" opacity=".68"/><rect x="22.0" y="101.00" width="20.0" height="1.5" fill="#d4d4d4" opacity=".68"/><rect x="42.0" y="101.00" width="1.0" height="1.5" fill="#dcdcdc" opacity=".68"/><rect x="43.0" y="101.00" width="3.0" height="1.5" fill="#569cd6"/><rect x="46.0" y="101.00" width="1.0" height="1.5" fill="#dcdcdc" opacity=".68"/><rect x="47.0" y="101.00" width="8.0" height="1.5" fill="#569cd6"/><rect x="55.0" y="101.00" width="1.0" height="1.5" fill="#dcdcdc" opacity=".68"/><rect x="0.0" y="103.02" width="5.0" height="1.5" fill="#569cd6"/><rect x="6.0" y="103.02" width="2.0" height="1.5" fill="#569cd6"/><rect x="9.0" y="103.02" width="4.0" height="1.5" fill="#d4d4d4" opacity=".68"/><rect x="13.0" y="103.02" width="1.0" height="1.5" fill="#dcdcdc" opacity=".68"/></g></svg>
<i class="vr" style="left:770px"></i>
<i class="sl" style="left:771px;width:18px"></i>
</div>
</div>

<div id="hdr">
    <svg style="left:31.6px;top:10.5px" width="38" height="29" viewBox="-1 -1 38 29">
    <defs>
      <linearGradient id="lgA" x1="0" y1="0" x2="0" y2="1"><stop offset="0" stop-color="#f04a35"/><stop offset=".45" stop-color="#ea2a1f"/><stop offset="1" stop-color="#d81e1b"/></linearGradient>
      <linearGradient id="lgB" x1="0" y1="0" x2="0" y2="1"><stop offset="0" stop-color="#f9b48a"/><stop offset=".35" stop-color="#f37a5a"/><stop offset=".8" stop-color="#e8281e"/></linearGradient>
      <linearGradient id="lgC" x1="1" y1="0" x2="0" y2="1"><stop offset="0" stop-color="#ee2a20"/><stop offset=".6" stop-color="#e0201c"/><stop offset="1" stop-color="#a81c1c"/></linearGradient>
      <linearGradient id="lgD" x1="0" y1="0" x2="1" y2="1"><stop offset="0" stop-color="#f0402c"/><stop offset="1" stop-color="#e0201c"/></linearGradient>
    </defs>
    <path d="M17.75 20C17.9 12 17.7 4 15.5.4C12 .2 9.3 4 10.1 8.2C10.9 12.6 14.4 17 17.75 20z" fill="url(#lgA)"/>
    <path d="M18.35 20C18.2 12 18.4 4 20.6.4C24.1.2 26.8 4 26 8.2C25.2 12.6 21.7 17 18.35 20z" fill="url(#lgB)"/>
    <path d="M15.3 20.5L6.2 5.5C3.4 7.4 2.4 10.6 3.9 13.2C5.9 16.6 11 19.1 15.3 20.5z" fill="url(#lgA)"/>
    <path d="M20.8 20.5L29.9 5.5C32.7 7.4 33.7 10.6 32.2 13.2C30.2 16.6 25.1 19.1 20.8 20.5z" fill="url(#lgD)"/>
    <path d="M14.8 21.7L.6 14.3C.1 17.4 1.4 20.1 4 21.9C7 23.7 11.6 23.4 14.8 21.7z" fill="url(#lgC)"/>
    <path d="M21.3 21.7L35.5 14.3C36 17.4 34.7 20.1 32.1 21.9C29.1 23.7 24.5 23.4 21.3 21.7z" fill="#e8241d"/>
    <path d="M14 23.2C10 24.3 6.5 24.3 4.1 23.7C4.9 25.6 6.5 26.7 8.4 26.7C10.6 26.5 12.6 24.9 14 23.2z" fill="#b51d1c"/>
    <path d="M22.1 23.2C26.1 24.3 29.6 24.3 32 23.7C31.2 25.6 29.6 26.7 27.7 26.7C25.5 26.5 23.5 24.9 22.1 23.2z" fill="#e0221c"/>
  </svg>
  <div class="t" style="left:32.6px;top:39.2px;font-size:8.7px;font-weight:bold;color:#fff;line-height:12px;letter-spacing:-.05px">HUAWEI</div>
  <div class="t" style="left:87.5px;top:19.6px;font-size:21.2px;color:#fff;line-height:24px;letter-spacing:-.95px">HUAWEI CLOUD</div>
  <div style="left:274px;top:20px;width:1px;height:22px;background:#50535c"></div>
  <div class="t" style="left:307.5px;top:20.6px;font-size:20.1px;font-weight:bold;color:#b4b8c2">Console</div>

  <div style="left:420px;top:9px;width:270px;height:44px;background:#181818;border-radius:5px"></div>
  <svg style="left:430px;top:20.5px" width="17" height="21" viewBox="0 0 17 21"><path fill-rule="evenodd" d="M8.4.6C3.9.6.5 3.9.5 8.2C.5 12.6 4.6 16.5 8.4 19.9C12.2 16.5 16.3 12.6 16.3 8.2C16.3 3.9 12.9.6 8.4.6zM8.4 5.1A3.3 3.3 0 1 1 8.4 11.7A3.3 3.3 0 1 1 8.4 5.1z" fill="#b9bcc5"/></svg>
  <div class="t" style="left:454px;top:20.1px;font-size:18.9px;color:#c5c8d1;letter-spacing:-.1px">Santiago</div>
  <svg style="left:661px;top:26px" width="16" height="10" viewBox="0 0 16 10"><path d="M1.4 1.4L8 7.9L14.6 1.4" fill="none" stroke="#c5c8d1" stroke-width="1.7"/></svg>

  <div style="left:1228px;top:9px;width:172px;height:44px;background:#3a3d46;border-radius:22px"></div>
  <svg style="left:1246px;top:20px" width="22" height="22" viewBox="0 0 22 22"><circle cx="9.9" cy="9.6" r="7.6" fill="none" stroke="#b4b7bf" stroke-width="1.35"/><path d="M15.2 15L20 20.3" stroke="#b4b7bf" stroke-width="1.35" fill="none"/></svg>
  <div class="t" style="left:1277.6px;top:20.1px;font-size:18.9px;color:#a9adb6;letter-spacing:-.08px">Enter a clou</div>
  <div class="t" style="left:1432.5px;top:20.1px;font-size:18.9px;color:#c9ccd4;letter-spacing:-.08px">More</div>

  <svg style="left:1509px;top:18px" width="26" height="28" viewBox="0 0 26 28"><g fill="none" stroke="#b4b7bf" stroke-width="1.35" stroke-linejoin="round"><path d="M1.7 20.3C3.7 17.6 4.6 15.8 4.6 13.4V9.8C4.6 4.9 8 1.5 12.4 1.5C16.8 1.5 20.2 4.9 20.2 9.8V13.4C20.2 15.8 21.1 17.6 23.2 20.3z"/><path d="M8.2 20.6C8.4 23.6 10.1 25.4 12.4 25.4C14.7 25.4 16.4 23.6 16.6 20.6"/></g></svg>
  <svg style="left:1556px;top:17px" width="29" height="29" viewBox="0 0 29 29"><g fill="none" stroke="#b4b7bf" stroke-width="1.35"><circle cx="14.4" cy="14.5" r="12.4"/><path d="M10.8 12.2C10.6 9.8 12.2 8.4 14.4 8.4C16.6 8.4 18.2 9.9 18.1 11.8C18 14 14.4 14.6 14.4 17V19.2"/><circle cx="14.4" cy="20.9" r="1.7"/></g></svg>
  <div style="left:1570px;top:13px;width:30px;height:13px;border-radius:7px;background:#f66f6a"></div>
  <div class="t" style="left:1570px;top:13px;width:30px;text-align:center;font-family:'Liberation Serif',serif;font-weight:bold;font-size:10px;line-height:13px;color:#fff;letter-spacing:-.2px">NEW</div>
  <svg style="left:1606px;top:19px" width="25" height="25" viewBox="0 0 25 25"><g fill="none" stroke="#b4b7bf" stroke-width="1.3"><circle cx="12.4" cy="12.5" r="10.3"/><ellipse cx="12.4" cy="12.5" rx="4.6" ry="10.3"/><path d="M12.4 2.2V22.8M2.7 9.7H22.1M2.7 15.4H22.1"/></g></svg>
  <div class="t" style="left:1635.3px;top:20.1px;font-size:18.9px;color:#c9ccd4;letter-spacing:-.2px">Intl-EN</div>
  <div style="left:1720px;top:20px;width:1px;height:22px;background:#50535c"></div>
  <div style="left:1745px;top:15.5px;width:153px;height:31px;overflow:hidden;background:linear-gradient(90deg,#33363e 0%,#373a42 18%,#3e414a 30%,#484b54 52%,#464952 80%,#3c3f48 100%)"><div style="left:8px;top:9px;width:130px;height:13px;background:rgba(70,73,84,.55);filter:blur(4px)"></div></div>

</div>
</body>
</html>
